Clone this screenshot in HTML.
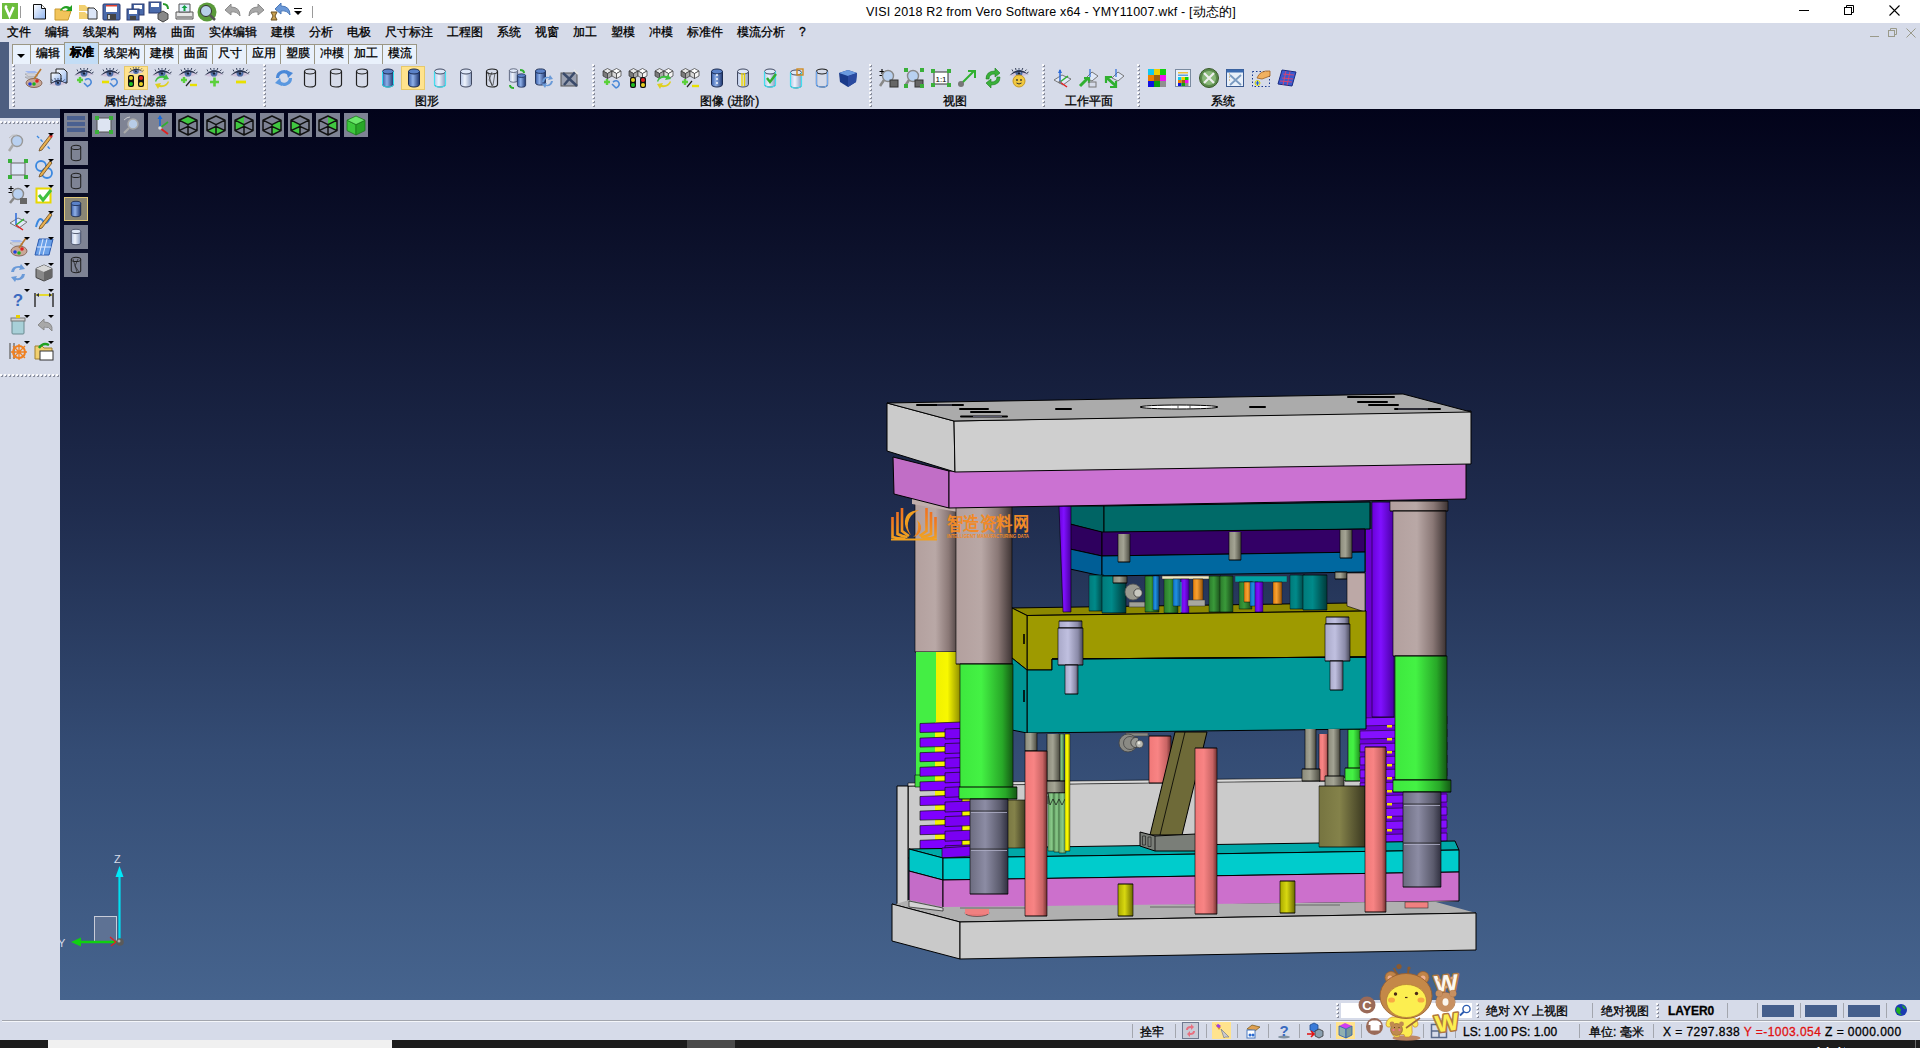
<!DOCTYPE html>
<html><head><meta charset="utf-8">
<style>
*{margin:0;padding:0;box-sizing:border-box}
html,body{width:1920px;height:1048px;overflow:hidden;background:#d6dbe9;font-family:"Liberation Sans",sans-serif;font-size:12px;color:#000}
.a{position:absolute}
.t{position:absolute;white-space:nowrap;line-height:1;-webkit-text-stroke-width:.3px}
.mn{position:absolute;top:25px;font-size:12px;line-height:14px;white-space:nowrap;-webkit-text-stroke-width:.3px}
.tab{position:absolute;top:44px;height:20px;border:1px solid #9b9785;border-bottom:none;background:#e9f1fc;font-size:12px;line-height:17px;text-align:center;-webkit-text-stroke-width:.3px}
.vb{position:absolute;width:24px;height:24px;background:#7e8394}
svg{position:absolute;overflow:visible}
.ic{position:absolute;width:20px;height:20px}
</style></head><body>

<svg width="0" height="0" style="position:absolute">
<defs><pattern id="dotp" width="4" height="4" patternUnits="userSpaceOnUse"><rect x="1" y="1" width="2" height="2" fill="#8a8e9c"/><rect x="0" y="0" width="2" height="2" fill="#fbfbfd"/></pattern>
<linearGradient id="gBlueCyl" x1="0" x2="1"><stop offset="0" stop-color="#3a5fa8"/><stop offset=".4" stop-color="#8fb0e8"/><stop offset="1" stop-color="#1d3570"/></linearGradient>
<linearGradient id="gLightCyl" x1="0" x2="1"><stop offset="0" stop-color="#b8c8e8"/><stop offset=".4" stop-color="#eef3fc"/><stop offset="1" stop-color="#8a9cc0"/></linearGradient>
<linearGradient id="gGray" x1="0" x2="1"><stop offset="0" stop-color="#c8c8c8"/><stop offset=".4" stop-color="#f0f0f0"/><stop offset="1" stop-color="#7a7a7a"/></linearGradient>
<linearGradient id="gDoc" x1="0" y1="0" x2="1" y2="1"><stop offset="0" stop-color="#ffffff"/><stop offset="1" stop-color="#8fb4f0"/></linearGradient>
<symbol id="eye" viewBox="0 0 20 10"><path d="M1 7.5 Q10 -1 19 6.5 Q10 10.5 1 7.5Z" fill="#cfc4dc"/><circle cx="10" cy="5.2" r="3.4" fill="#4d6da6"/><circle cx="10.6" cy="4.6" r="1.2" fill="#9ab4e0"/><circle cx="10" cy="5.4" r="1.2" fill="#141c30"/><path d="M0.5 7.5 Q10 -2.5 19.5 6.5 Q10 0.8 0.5 7.5Z" fill="#28324c"/><path d="M4 3.5 l-1 -2 M7 2 l-.5 -2 M10 1.5 v-1.5 M13 2 l.8 -2 M16 3.2 l1.5 -1.6 M18 5 l1.6 -1" stroke="#28324c" stroke-width=".9"/></symbol>
<symbol id="cylO" viewBox="0 0 14 20"><path d="M1.5 3.5v13a5.5 2.5 0 0 0 11 0v-13" fill="none" stroke="#222" stroke-width="1.2"/><ellipse cx="7" cy="3.5" rx="5.5" ry="2.5" fill="none" stroke="#222" stroke-width="1.2"/></symbol>
<symbol id="cylB" viewBox="0 0 14 20"><path d="M1.5 3.5v13a5.5 2.5 0 0 0 11 0v-13z" fill="url(#gBlueCyl)" stroke="#1a2a50" stroke-width="1"/><ellipse cx="7" cy="3.5" rx="5.5" ry="2.5" fill="#5b82c8" stroke="#1a2a50" stroke-width="1"/></symbol>
<symbol id="cylL" viewBox="0 0 14 20"><path d="M1.5 3.5v13a5.5 2.5 0 0 0 11 0v-13z" fill="url(#gLightCyl)" stroke="#404860" stroke-width="1"/><ellipse cx="7" cy="3.5" rx="5.5" ry="2.5" fill="#dfe8f8" stroke="#404860" stroke-width="1"/></symbol>
<symbol id="cube" viewBox="0 0 20 20"><path d="M10 2 L18 5.5 L18 14.5 L10 18 L2 14.5 L2 5.5Z" fill="#c8c8c8" stroke="#333" stroke-width="1"/><path d="M2 5.5 L10 9 L18 5.5 M10 9 V18" stroke="#333" fill="none"/><path d="M10 2 L18 5.5 L10 9 L2 5.5Z" fill="#f0f0f0" stroke="#333"/></symbol>
</defs></svg>

<div class="a" style="left:0;top:0;width:1920px;height:23px;background:#fff"></div>
<div class="t" style="left:866px;top:6px;font-size:12.5px;letter-spacing:.18px;-webkit-text-stroke:0">VISI 2018 R2 from Vero Software x64 - YMY11007.wkf - [动态的]</div>
<svg style="left:0;top:0" width="320" height="23">
<rect x="2" y="3" width="16" height="16" fill="#6cbd3c"/><path d="M5.5 7 L9.5 16 L13.5 7" stroke="#fff" stroke-width="2.6" fill="none"/><circle cx="6" cy="6.5" r="1.3" fill="#fff"/>
<rect x="20" y="6" width="1" height="12" fill="#9a9a9a"/>
<path d="M33.5 4.5h8l4 4v10.5h-12z" fill="url(#gDoc)" stroke="#111" stroke-width="1"/><path d="M41.5 4.5v4h4" fill="#fff" stroke="#111"/>
<path d="M55 9h6l2 2h8l-3 9h-13z" fill="#f2c45a" stroke="#c89a30"/><path d="M60 10 q4 -6 10 -3 l2 -2 v6 h-6 l2 -2 q-4 -2 -7 2z" fill="#22a022"/>
<path d="M79 5h6l2 2h3v4h-11z" fill="#f2d070"/><path d="M79 12h6l2 2h3v5h-11z" fill="#f2d070"/><path d="M88 8h6l3 3v8h-9z" fill="#dce6f8" stroke="#333"/>
<rect x="103" y="4" width="17" height="16" rx="1" fill="#4a6aaa" stroke="#2a3a70"/><rect x="106" y="5" width="11" height="7" fill="#fff"/><rect x="106" y="5" width="11" height="1.5" fill="#e04030"/><rect x="107" y="14" width="9" height="6" fill="#444"/><rect x="108" y="15" width="2" height="4" fill="#ccc"/>
<rect x="132" y="4" width="12" height="11" fill="#4a6aaa" stroke="#2a3a70"/><rect x="134" y="5" width="8" height="4" fill="#fff"/><rect x="127" y="9" width="12" height="11" fill="#4a6aaa" stroke="#2a3a70"/><rect x="129" y="10" width="8" height="4" fill="#fff"/><rect x="130" y="16" width="6" height="4" fill="#444"/>
<rect x="149" y="2" width="12" height="11" fill="#4a6aaa" stroke="#2a3a70"/><rect x="151" y="3" width="8" height="4" fill="#fff"/><path d="M158 14 l5 -3 l5 3 v5 l-5 3 l-5 -3z" fill="#888" stroke="#444"/><path d="M163 4 q5 0 5 5" stroke="#2a9a2a" stroke-width="2" fill="none"/>
<path d="M176 12h17v7h-17z" fill="#e8e8e8" stroke="#555"/><path d="M179 4h11v8h-11z" fill="#e0f0ff" stroke="#555"/><path d="M184.5 5 l3 3 h-2 v3 h-2 v-3 h-2z" fill="#10a040"/><rect x="177" y="16" width="15" height="2" fill="#999"/>
<circle cx="207" cy="12" r="9.5" fill="#5a9a3a"/><circle cx="206" cy="11" r="5.5" fill="#b8d0e8" stroke="#333"/><path d="M210 15 l5 5" stroke="#555" stroke-width="2.5"/>
<path d="M225 10 l6 -6 v3 q9 0 9 9 q-3 -5 -9 -4 v3z" fill="#a8a8a8" stroke="#8a8a8a"/>
<path d="M264 10 l-6 -6 v3 q-9 0 -9 9 q3 -5 9 -4 v3z" fill="#a8a8a8" stroke="#8a8a8a"/>
<path d="M275 9 l6 -6 v3 q9 0 9 9 q-3 -5 -9 -4 v3z" fill="#6a98d8" stroke="#4a78b8"/><path d="M271 12h6l-2 4 2 4h-6l2 -4z" fill="#c8a050" stroke="#6a5020"/>
<rect x="294" y="8" width="8" height="1" fill="#000"/><path d="M294 11h8l-4 4z" fill="#000"/>
<rect x="312" y="6" width="1" height="12" fill="#9a9a9a"/>
</svg>
<svg style="left:1780px;top:0" width="140" height="23">
<rect x="19" y="10" width="10" height="1" fill="#000"/>
<rect x="64.5" y="7.5" width="7" height="7" fill="none" stroke="#000"/><path d="M66.5 7.5v-2h7v7h-2" fill="none" stroke="#000"/>
<path d="M109.5 5.5l10 10M119.5 5.5l-10 10" stroke="#000" stroke-width="1.1"/>
</svg>
<div class="mn" style="left:7px">文件</div>
<div class="mn" style="left:45px">编辑</div>
<div class="mn" style="left:83px">线架构</div>
<div class="mn" style="left:133px">网格</div>
<div class="mn" style="left:171px">曲面</div>
<div class="mn" style="left:209px">实体编辑</div>
<div class="mn" style="left:271px">建模</div>
<div class="mn" style="left:309px">分析</div>
<div class="mn" style="left:347px">电极</div>
<div class="mn" style="left:385px">尺寸标注</div>
<div class="mn" style="left:447px">工程图</div>
<div class="mn" style="left:497px">系统</div>
<div class="mn" style="left:535px">视窗</div>
<div class="mn" style="left:573px">加工</div>
<div class="mn" style="left:611px">塑模</div>
<div class="mn" style="left:649px">冲模</div>
<div class="mn" style="left:687px">标准件</div>
<div class="mn" style="left:737px">模流分析</div>
<div class="mn" style="left:799px">?</div>
<svg style="left:1860px;top:23px" width="60" height="20">
<rect x="10" y="13" width="9" height="1" fill="#9a9a8a"/>
<rect x="28.5" y="7.5" width="6" height="6" fill="none" stroke="#9a9a8a"/><path d="M30.5 7.5v-2h6v6h-2" fill="none" stroke="#9a9a8a"/>
<path d="M46.5 5.5l9 9M55.5 5.5l-9 9" stroke="#9a9a8a"/>
</svg>
<div class="a" style="left:0;top:42px;width:9px;height:76px;background:#4d5e80"></div>
<div class="a" style="left:0;top:109px;width:60px;height:9px;background:#4d5e80"></div>
<div class="tab" style="left:12px;width:19px"></div>
<div class="tab" style="left:30px;width:35px">编辑</div>
<div class="tab" style="left:98px;width:47px">线架构</div>
<div class="tab" style="left:144px;width:35px">建模</div>
<div class="tab" style="left:178px;width:35px">曲面</div>
<div class="tab" style="left:212px;width:35px">尺寸</div>
<div class="tab" style="left:246px;width:35px">应用</div>
<div class="tab" style="left:280px;width:35px">塑膜</div>
<div class="tab" style="left:314px;width:35px">冲模</div>
<div class="tab" style="left:348px;width:35px">加工</div>
<div class="tab" style="left:382px;width:35px">模流</div>
<div class="tab" style="left:64px;width:35px;top:42px;height:22px;background:#c3ddf6;font-weight:bold;line-height:19px">标准</div>
<svg style="left:12px;top:45px" width="20" height="20"><path d="M5 9h8l-4 4z" fill="#000"/></svg>
<svg style="left:12px;top:64px" width="3" height="44"><rect width="3" height="44" fill="url(#dotp)"/></svg>
<svg style="left:263px;top:64px" width="3" height="44"><rect width="3" height="44" fill="url(#dotp)"/></svg>
<svg style="left:592px;top:64px" width="3" height="44"><rect width="3" height="44" fill="url(#dotp)"/></svg>
<svg style="left:869px;top:64px" width="3" height="44"><rect width="3" height="44" fill="url(#dotp)"/></svg>
<svg style="left:1042px;top:64px" width="3" height="44"><rect width="3" height="44" fill="url(#dotp)"/></svg>
<svg style="left:1137px;top:64px" width="3" height="44"><rect width="3" height="44" fill="url(#dotp)"/></svg>
<div class="t" style="left:104px;top:95px">属性/过滤器</div>
<div class="t" style="left:415px;top:95px">图形</div>
<div class="t" style="left:700px;top:95px">图像 (进阶)</div>
<div class="t" style="left:943px;top:95px">视图</div>
<div class="t" style="left:1065px;top:95px">工作平面</div>
<div class="t" style="left:1211px;top:95px">系统</div>
<div class="a" style="left:124px;top:66px;width:24px;height:24px;background:#ffe38d;border:1px solid #e7c96a"></div>
<div class="a" style="left:401px;top:66px;width:24px;height:24px;background:#ffe38d;border:1px solid #e7c96a"></div>
<svg style="left:0;top:0" width="1320" height="110"><g transform="translate(23,68)"><path d="M2 3h10l3 2h-10z" fill="#a0b8f0"/><path d="M2 6h10l3 2h-10z" fill="#e8e8f0" stroke="#888" stroke-width=".5"/><path d="M2 9h10l3 2h-10z" fill="#d0d0d8" stroke="#888" stroke-width=".5"/><ellipse cx="11" cy="15" rx="8" ry="4.5" fill="#c8a898" stroke="#8a6a5a"/><circle cx="7" cy="16" r="1.8" fill="#2040e0"/><circle cx="11" cy="16" r="1.8" fill="#20b020"/><circle cx="14" cy="13" r="1.8" fill="#e02020"/><path d="M18 1 l-7 10" stroke="#b87830" stroke-width="1.6"/></g><g transform="translate(48,68)"><path d="M8 1h8l3 3v11h-11z" fill="url(#gDoc)" stroke="#222"/><path d="M3 5h8l2 2v8h-10z" fill="url(#gDoc)" stroke="#222"/><use href="#eye" x="1" y="10" width="18" height="9"/></g><g transform="translate(74,68)"><use href="#eye" x="0" y="-0.5" width="20" height="11"/><path d="M3 12h6M6 9v6" stroke="#5ad03a" stroke-width="2.4"/><path d="M11 12 q4 -3 6 1 q1 3 -3 5 M10 15 l4 4" stroke="#4a88d8" stroke-width="1.6" fill="none"/></g><g transform="translate(100,68)"><use href="#eye" x="0" y="-0.5" width="20" height="11"/><path d="M2 14h7" stroke="#e8e000" stroke-width="2.6"/><path d="M11 12 q4 -3 6 1 q1 3 -3 5 M10 15 l4 4" stroke="#4a88d8" stroke-width="1.6" fill="none"/></g><g transform="translate(126,68)"><use href="#eye" x="2" y="-1" width="16" height="8"/><rect x="2" y="7" width="6" height="12" rx="2" fill="#111"/><circle cx="5" cy="10" r="2" fill="#e8d020"/><circle cx="5" cy="16" r="2" fill="#20c020"/><rect x="12" y="7" width="6" height="12" rx="2" fill="#111"/><circle cx="15" cy="10" r="2" fill="#e02020"/><circle cx="15" cy="16" r="2" fill="#e8d020"/></g><g transform="translate(152,68)"><use href="#eye" x="0" y="-0.5" width="20" height="11"/><path d="M3 13 q2 -6 10 -5 l1 -2 l3 5 l-6 1 l1 -2 q-6 -1 -8 4z" fill="#40c040"/><path d="M17 14 q-2 6 -10 5 l-1 2 l-3 -5 l6 -1 l-1 2 q6 1 8 -4z" fill="#e0d020"/></g><g transform="translate(178,68)"><use href="#eye" x="0" y="-0.5" width="20" height="11"/><path d="M3 12h6M6 9v6" stroke="#5ad03a" stroke-width="2.4"/><path d="M8 18l5 -6" stroke="#222" stroke-width="1.2"/><path d="M12 17h7" stroke="#e8e000" stroke-width="2.4"/></g><g transform="translate(204,68)"><use href="#eye" x="0" y="-0.5" width="20" height="11"/><path d="M6 14h9M10.5 9.5v9" stroke="#5ad03a" stroke-width="2.6"/></g><g transform="translate(230,68)"><use href="#eye" x="0" y="-0.5" width="20" height="11"/><path d="M6 14h10" stroke="#e8e000" stroke-width="2.8"/></g><g transform="translate(274,68)"><path d="M3.5 10 A6.5 6.5 0 0 1 15 6" stroke="#4a88d8" stroke-width="3.2" fill="none"/><path d="M12 2 L19 5 L14 10Z" fill="#4a88d8"/><path d="M16.5 10 A6.5 6.5 0 0 1 5 14" stroke="#5a98e0" stroke-width="3.2" fill="none"/><path d="M8 18 L1 15 L6 10Z" fill="#5a98e0"/></g><use href="#cylO" x="303" y="68" width="14" height="20"/><use href="#cylO" x="329" y="68" width="14" height="20"/><use href="#cylO" x="355" y="68" width="14" height="20"/><use href="#cylB" x="381" y="68" width="14" height="20"/><path d="M382.5 71.5v13a5.5 2.5 0 0 0 11 0v-13" fill="none" stroke="#30e0f0" stroke-width="1"/><use href="#cylB" x="407" y="68" width="14" height="20"/><use href="#cylL" x="433" y="68" width="14" height="20"/><path d="M434.5 71.5v13a5.5 2.5 0 0 0 11 0v-13" fill="none" stroke="#40e0f0" stroke-width="1.2"/><use href="#cylL" x="459" y="68" width="14" height="20"/><use href="#cylO" x="485" y="68" width="14" height="20"/><path d="M488 72 l4 14 M492 72 l-3 8 l4 6 M495 73 l-2 12" stroke="#333" stroke-width=".7" fill="none"/><g transform="translate(508,68)"><use href="#cylL" x="0" y="0" width="11" height="15"/><use href="#cylB" x="8" y="5" width="11" height="15"/><path d="M12 2 q4 0 4 3" stroke="#30b030" stroke-width="2" fill="none"/><path d="M2 17 q0 3 4 3" stroke="#30b030" stroke-width="2" fill="none"/></g><g transform="translate(534,68)"><use href="#cylB" x="0" y="0" width="13" height="18"/><path d="M8 14 q1 -6 7 -5 l1 -2 l3 4 l-5 1 l1 -2 q-4 0 -5 4z" fill="#6a9ad8"/><path d="M19 13 q-1 6 -7 5 l-1 2 l-3 -4 l5 -1 l-1 2 q4 0 5 -4z" fill="#6a9ad8"/></g><g transform="translate(560,68)"><rect x="1" y="5" width="16" height="13" fill="#9aa0b0" stroke="#555"/><path d="M3 5 l14 13 M16 3 l-12 14" stroke="#3a4a6a" stroke-width="2.4"/><path d="M14 2 l4 4" stroke="#e8e8e8" stroke-width="2"/></g><g transform="translate(602,68)"><path d="M1 3.0 L5.5 0.5 L10 3.0 L5.5 5.5Z" fill="#e8e8e8" stroke="#333" stroke-width=".7"/><path d="M1 3.0 L5.5 5.5 V10.5 L1 8.0Z" fill="#7a7a7a" stroke="#333" stroke-width=".7"/><path d="M5.5 5.5 L10 3.0 V8.0 L5.5 10.5Z" fill="#a8a8a8" stroke="#333" stroke-width=".7"/><path d="M10 3.0 L14.5 0.5 L19 3.0 L14.5 5.5Z" fill="#ffffff" stroke="#333" stroke-width=".7"/><path d="M10 3.0 L14.5 5.5 V10.5 L10 8.0Z" fill="#d8d8d8" stroke="#333" stroke-width=".7"/><path d="M14.5 5.5 L19 3.0 V8.0 L14.5 10.5Z" fill="#f4f4f4" stroke="#333" stroke-width=".7"/><path d="M2 14h6M5 11v6" stroke="#5ad03a" stroke-width="2.4"/><path d="M11 14 q4 -3 6 1 q1 3 -3 5 M10 16 l4 4" stroke="#4a88d8" stroke-width="1.6" fill="none"/></g><g transform="translate(628,68)"><path d="M1 3.0 L5.5 0.5 L10 3.0 L5.5 5.5Z" fill="#e8e8e8" stroke="#333" stroke-width=".7"/><path d="M1 3.0 L5.5 5.5 V10.5 L1 8.0Z" fill="#7a7a7a" stroke="#333" stroke-width=".7"/><path d="M5.5 5.5 L10 3.0 V8.0 L5.5 10.5Z" fill="#a8a8a8" stroke="#333" stroke-width=".7"/><path d="M10 3.0 L14.5 0.5 L19 3.0 L14.5 5.5Z" fill="#ffffff" stroke="#333" stroke-width=".7"/><path d="M10 3.0 L14.5 5.5 V10.5 L10 8.0Z" fill="#d8d8d8" stroke="#333" stroke-width=".7"/><path d="M14.5 5.5 L19 3.0 V8.0 L14.5 10.5Z" fill="#f4f4f4" stroke="#333" stroke-width=".7"/><rect x="2" y="9" width="6" height="11" rx="2" fill="#111"/><circle cx="5" cy="12" r="2" fill="#e8d020"/><circle cx="5" cy="17" r="2" fill="#20c020"/><rect x="12" y="9" width="6" height="11" rx="2" fill="#111"/><circle cx="15" cy="12" r="2" fill="#e02020"/><circle cx="15" cy="17" r="2" fill="#e8d020"/></g><g transform="translate(654,68)"><path d="M1 3.0 L5.5 0.5 L10 3.0 L5.5 5.5Z" fill="#e8e8e8" stroke="#333" stroke-width=".7"/><path d="M1 3.0 L5.5 5.5 V10.5 L1 8.0Z" fill="#7a7a7a" stroke="#333" stroke-width=".7"/><path d="M5.5 5.5 L10 3.0 V8.0 L5.5 10.5Z" fill="#a8a8a8" stroke="#333" stroke-width=".7"/><path d="M10 3.0 L14.5 0.5 L19 3.0 L14.5 5.5Z" fill="#ffffff" stroke="#333" stroke-width=".7"/><path d="M10 3.0 L14.5 5.5 V10.5 L10 8.0Z" fill="#d8d8d8" stroke="#333" stroke-width=".7"/><path d="M14.5 5.5 L19 3.0 V8.0 L14.5 10.5Z" fill="#f4f4f4" stroke="#333" stroke-width=".7"/><path d="M3 13 q2 -6 10 -5 l1 -2 l3 5 l-6 1 l1 -2 q-6 -1 -8 4z" fill="#40c040"/><path d="M17 14 q-2 6 -10 5 l-1 2 l-3 -5 l6 -1 l-1 2 q6 1 8 -4z" fill="#e0d020"/></g><g transform="translate(680,68)"><path d="M1 3.0 L5.5 0.5 L10 3.0 L5.5 5.5Z" fill="#e8e8e8" stroke="#333" stroke-width=".7"/><path d="M1 3.0 L5.5 5.5 V10.5 L1 8.0Z" fill="#7a7a7a" stroke="#333" stroke-width=".7"/><path d="M5.5 5.5 L10 3.0 V8.0 L5.5 10.5Z" fill="#a8a8a8" stroke="#333" stroke-width=".7"/><path d="M10 3.0 L14.5 0.5 L19 3.0 L14.5 5.5Z" fill="#ffffff" stroke="#333" stroke-width=".7"/><path d="M10 3.0 L14.5 5.5 V10.5 L10 8.0Z" fill="#d8d8d8" stroke="#333" stroke-width=".7"/><path d="M14.5 5.5 L19 3.0 V8.0 L14.5 10.5Z" fill="#f4f4f4" stroke="#333" stroke-width=".7"/><path d="M2 14h6M5 11v6" stroke="#5ad03a" stroke-width="2.4"/><path d="M7 19l5 -6" stroke="#222" stroke-width="1.2"/><path d="M12 18h7" stroke="#e8e000" stroke-width="2.4"/></g><use href="#cylB" x="710" y="68" width="14" height="20"/><path d="M717 74v10" stroke="#fff" stroke-width="1.4" stroke-dasharray="2 2"/><use href="#cylL" x="736" y="68" width="14" height="20"/><path d="M742 73v13M744.5 73v13" stroke="#e8d000" stroke-width="1.4"/><use href="#cylL" x="763" y="68" width="14" height="20"/><path d="M764.5 71.5v13a5.5 2.5 0 0 0 11 0v-13" fill="none" stroke="#40e0f0" stroke-width="1.2"/><path d="M767 78l3 4 6 -8" stroke="#30b030" stroke-width="2.4" fill="none"/><use href="#cylL" x="789" y="69" width="14" height="20"/><path d="M790.5 72.5v13a5.5 2.5 0 0 0 11 0v-13" fill="none" stroke="#40e0f0" stroke-width="1.2"/><rect x="797" y="69" width="6" height="6" fill="none" stroke="#d08a20" stroke-width="1.4"/><use href="#cylO" x="815" y="68" width="14" height="20"/><path d="M816.5 71.5v13a5.5 2.5 0 0 0 11 0v-13" fill="none" stroke="#70a8f0" stroke-width="1.2"/><g transform="translate(838,68)"><path d="M10 2 L19 5 L18 14 L10 19 L2 14 L1 5Z" fill="#1a3a8a"/><path d="M1 5 L10 8 L19 5 L10 2Z" fill="#6a9ae0"/><path d="M10 8 L10 19 L18 14 L19 5Z" fill="#2a4aa0"/></g><g transform="translate(879,68)"><path d="M0.5 3.5h5M3 1v5M0.5 7.5h5" stroke="#000" stroke-width="1.1"/><circle cx="9" cy="8" r="5.5" fill="#b8d0f0" stroke="#888" stroke-width="1.4"/><path d="M5 12 l-4 6" stroke="#888" stroke-width="2.5"/><rect x="11" y="12" width="8" height="7" fill="#666" stroke="#333"/></g><g transform="translate(904,68)"><circle cx="9" cy="8" r="5.5" fill="#b8d0f0" stroke="#888" stroke-width="1.4"/><path d="M5 12 l-4 6" stroke="#888" stroke-width="2.5"/><rect x="11" y="12" width="8" height="7" fill="#666" stroke="#333"/><rect x="0" y="0" width="4" height="4" fill="#3ab03a"/><rect x="16" y="0" width="4" height="4" fill="#3ab03a"/><rect x="0" y="16" width="4" height="4" fill="#3ab03a"/><rect x="16" y="16" width="4" height="4" fill="#3ab03a"/></g><g transform="translate(931,68)"><rect x="3" y="4" width="14" height="12" fill="#fff" stroke="#333"/><text x="10" y="13.5" font-size="8" text-anchor="middle" font-family="Liberation Sans" fill="#000">1:1</text><rect x="0" y="1" width="4" height="4" fill="#3ab03a"/><rect x="16" y="1" width="4" height="4" fill="#3ab03a"/><rect x="0" y="15" width="4" height="4" fill="#3ab03a"/><rect x="16" y="15" width="4" height="4" fill="#3ab03a"/></g><g transform="translate(957,68)"><path d="M4 16 L17 3" stroke="#30b030" stroke-width="2"/><path d="M11 3h7v7" stroke="#30b030" stroke-width="2" fill="none"/><circle cx="4" cy="16" r="3" fill="#777"/></g><g transform="translate(983,68)"><path d="M3 11 q0 -8 9 -8 l0 -3 l5 5 l-5 4 v-3 q-6 0 -6 5z" fill="#3ab03a" stroke="#1a801a" stroke-width=".6"/><path d="M17 9 q0 8 -9 8 l0 3 l-5 -5 l5 -4 v3 q6 0 6 -5z" fill="#3ab03a" stroke="#1a801a" stroke-width=".6"/></g><g transform="translate(1009,68)"><use href="#eye" x="0" y="0" width="20" height="10"/><circle cx="10" cy="13" r="6" fill="#f0c840" stroke="#c89a20"/><circle cx="8" cy="12" r=".9" fill="#333"/><circle cx="12" cy="12" r=".9" fill="#333"/><path d="M7.5 15 q2.5 2 5 0" stroke="#333" fill="none"/></g><g transform="translate(1052,68)"><path d="M2 12 L10 7 L19 11 L11 17Z" fill="#e0e8f8" stroke="#777"/><path d="M8 14 V2" stroke="#2a6ad8" stroke-width="1.5"/><path d="M6 5l2 -4 2 4z" fill="#2a6ad8"/><path d="M8 14 L16 8" stroke="#30b030" stroke-width="1.5"/><path d="M8 14 L15 19" stroke="#e02020" stroke-width="1.5"/><circle cx="8" cy="14" r="1.6" fill="#777"/></g><g transform="translate(1078,68)"><path d="M8 10 L14 4 L20 8 L14 13Z" fill="#e0e8f8" stroke="#777"/><path d="M12 9 V1" stroke="#2a6ad8" stroke-width="1.2"/><path d="M2 18 L10 10" stroke="#30b030" stroke-width="3"/><path d="M6 10h5v5" stroke="#30b030" stroke-width="2.2" fill="none"/><rect x="11" y="14" width="7" height="5" fill="none" stroke="#777"/></g><g transform="translate(1104,68)"><path d="M8 10 L14 4 L20 8 L14 13Z" fill="#e0e8f8" stroke="#777"/><path d="M12 9 V1" stroke="#2a6ad8" stroke-width="1.2"/><path d="M3 10 L12 18" stroke="#30b030" stroke-width="3"/><path d="M2 15v-6h6" stroke="#30b030" stroke-width="2.2" fill="none"/><path d="M12 13v6h-6" stroke="#30b030" stroke-width="2.2" fill="none"/></g><g transform="translate(1147,68)"><rect x="1" y="1" width="6" height="6" fill="#10c8f0"/><rect x="7" y="1" width="6" height="6" fill="#f0d000"/><rect x="13" y="1" width="6" height="6" fill="#10d010"/><rect x="1" y="7" width="6" height="6" fill="#f08000"/><rect x="7" y="7" width="6" height="6" fill="#a06010"/><rect x="13" y="7" width="6" height="6" fill="#f010f0"/><rect x="1" y="13" width="6" height="6" fill="#1010e0"/><rect x="7" y="13" width="6" height="6" fill="#10a010"/><rect x="13" y="13" width="6" height="6" fill="#909090"/></g><g transform="translate(1173,68)"><rect x="2.5" y="1.5" width="15" height="17" fill="#e8f0fa" stroke="#7a8aa0"/><rect x="5" y="4" width="10" height="1.5" fill="#f0c040"/><rect x="5" y="6.5" width="10" height="1.5" fill="#60a0e0"/><rect x="5.0" y="9" width="3.5" height="3" fill="#10c8f0"/><rect x="8.5" y="9" width="3.5" height="3" fill="#f0d000"/><rect x="12.0" y="9" width="3.5" height="3" fill="#10d010"/><rect x="5.0" y="12" width="3.5" height="3" fill="#f08000"/><rect x="8.5" y="12" width="3.5" height="3" fill="#a06010"/><rect x="12.0" y="12" width="3.5" height="3" fill="#f010f0"/><rect x="5.0" y="15" width="3.5" height="3" fill="#1010e0"/><rect x="8.5" y="15" width="3.5" height="3" fill="#10a010"/><rect x="12.0" y="15" width="3.5" height="3" fill="#909090"/></g><g transform="translate(1199,68)"><circle cx="10" cy="10" r="9.5" fill="#5a8a4a" stroke="#3a5a2a"/><circle cx="10" cy="10" r="7" fill="#8ab87a"/><path d="M5 5 L15 15 M15 5 L5 15" stroke="#eee" stroke-width="2.2"/></g><g transform="translate(1225,68)"><rect x="1.5" y="1.5" width="17" height="17" fill="#e8f0fa" stroke="#3a5a90"/><rect x="1.5" y="1.5" width="17" height="3" fill="#3a6ab0"/><path d="M5 7 L16 17 M16 7 L5 17" stroke="#7a9ac0" stroke-width="1.8"/><path d="M4 6h1M4 9h1M4 12h1" stroke="#c09040"/></g><g transform="translate(1251,68)"><rect x="1.5" y="3.5" width="17" height="15" fill="none" stroke="#1a3a90" stroke-dasharray="1.5 2"/><path d="M6 10 q3 -8 13 -7 v5 l-8 3z" fill="#f0b060" stroke="#a06020" stroke-width=".8"/><path d="M4 15h5M6.5 12.5v5" stroke="#1a5ad0" stroke-width="1.2"/><circle cx="6.5" cy="15" r="2.5" fill="none" stroke="#e0e000"/></g><g transform="translate(1277,68)"><path d="M5 2 L19 4 L15 18 L1 16Z" fill="#3a5ad0" stroke="#1a2a80"/><path d="M6 6 L17 7 M5 10 L16 11 M3 13 L15 14 M9 3 L6 17 M13 3.5 L10 17.5" stroke="#f04060" stroke-width=".8"/></g></svg>
<div class="a" id="vp" style="left:60px;top:109px;width:1860px;height:891px;background:linear-gradient(#02031a 0%,#0f1530 20%,#1f2c4e 45%,#344c74 72%,#46648e 100%)"></div>
<svg style="left:0;top:0" width="400" height="300"><rect x="64" y="113" width="24" height="24" fill="#7e8394"/><rect x="92" y="113" width="24" height="24" fill="#7e8394"/><rect x="120" y="113" width="24" height="24" fill="#7e8394"/><rect x="148" y="113" width="24" height="24" fill="#7e8394"/><rect x="176" y="113" width="24" height="24" fill="#7e8394"/><rect x="204" y="113" width="24" height="24" fill="#7e8394"/><rect x="232" y="113" width="24" height="24" fill="#7e8394"/><rect x="260" y="113" width="24" height="24" fill="#7e8394"/><rect x="288" y="113" width="24" height="24" fill="#7e8394"/><rect x="316" y="113" width="24" height="24" fill="#7e8394"/><rect x="344" y="113" width="24" height="24" fill="#7e8394"/><rect x="67" y="116" width="18" height="4" fill="#4a6090"/><rect x="67" y="122" width="18" height="4" fill="#4a6090"/><rect x="67" y="128" width="18" height="4" fill="#4a6090"/><rect x="97" y="118" width="14" height="14" fill="#dde4f2" stroke="#555"/><path d="M95 116h4v4h-4zM109 116h4v4h-4zM95 130h4v4h-4zM109 130h4v4h-4z" fill="#3ab03a"/><circle cx="133" cy="124" r="5" fill="#b8cce8" stroke="#aaa" stroke-width="1.5"/><path d="M129 128l-5 5" stroke="#aaa" stroke-width="2.2"/><path d="M124 120 q3 -3 6 -3" stroke="#ccc" fill="none"/><path d="M160 128 V116" stroke="#1a6ad8" stroke-width="1.6"/><path d="M157.5 119l2.5 -4 2.5 4z" fill="#1a6ad8"/><path d="M160 128 L168 122" stroke="#30b030" stroke-width="1.6"/><path d="M160 128 L168 134" stroke="#e02020" stroke-width="1.8"/><circle cx="160" cy="128" r="1.8" fill="#ddd"/><polygon points="179,120.2 188,116 197,120.2 188,124.6" fill="#40c840"/><path d="M179,120.2 L188,116 L197,120.2 L188,124.6 Z M179,120.2 L179,130.6 L188,135 L197,130.6 L197,120.2 M188,124.6 L188,135 M179,130.6 L188,126.4 L197,130.6" fill="none" stroke="#111" stroke-width="1.5" stroke-linejoin="round"/><polygon points="207,130.6 216,126.4 225,130.6 216,135" fill="#40c840"/><path d="M207,120.2 L216,116 L225,120.2 L216,124.6 Z M207,120.2 L207,130.6 L216,135 L225,130.6 L225,120.2 M216,124.6 L216,135 M207,130.6 L216,126.4 L225,130.6" fill="none" stroke="#111" stroke-width="1.5" stroke-linejoin="round"/><polygon points="235,120.2 244,116 244,126.4 235,130.6" fill="#40c840"/><path d="M235,120.2 L244,116 L253,120.2 L244,124.6 Z M235,120.2 L235,130.6 L244,135 L253,130.6 L253,120.2 M244,124.6 L244,135 M235,130.6 L244,126.4 L253,130.6" fill="none" stroke="#111" stroke-width="1.5" stroke-linejoin="round"/><polygon points="272,124.6 281,120.2 281,130.6 272,135" fill="#40c840"/><path d="M263,120.2 L272,116 L281,120.2 L272,124.6 Z M263,120.2 L263,130.6 L272,135 L281,130.6 L281,120.2 M272,124.6 L272,135 M263,130.6 L272,126.4 L281,130.6" fill="none" stroke="#111" stroke-width="1.5" stroke-linejoin="round"/><polygon points="291,120.2 300,124.6 300,135 291,130.6" fill="#40c840"/><path d="M291,120.2 L300,116 L309,120.2 L300,124.6 Z M291,120.2 L291,130.6 L300,135 L309,130.6 L309,120.2 M300,124.6 L300,135 M291,130.6 L300,126.4 L309,130.6" fill="none" stroke="#111" stroke-width="1.5" stroke-linejoin="round"/><polygon points="328,116 337,120.2 337,130.6 328,126.4" fill="#40c840"/><path d="M319,120.2 L328,116 L337,120.2 L328,124.6 Z M319,120.2 L319,130.6 L328,135 L337,130.6 L337,120.2 M328,124.6 L328,135 M319,130.6 L328,126.4 L337,130.6" fill="none" stroke="#111" stroke-width="1.5" stroke-linejoin="round"/><polygon points="347,120.2 356,124.6 356,135 347,130.6" fill="#3cc83c" stroke="#1a7a1a" stroke-width=".8"/><polygon points="356,124.6 365,120.2 365,130.6 356,135" fill="#28a828" stroke="#1a7a1a" stroke-width=".8"/><polygon points="347,120.2 356,116 365,120.2 356,124.6" fill="#6ae86a" stroke="#1a7a1a" stroke-width=".8"/><rect x="64" y="141" width="24" height="24" fill="#7e8394"/><rect x="64" y="169" width="24" height="24" fill="#7e8394"/><rect x="64.5" y="197.5" width="23" height="23" fill="#8a8674" stroke="#e0c878"/><rect x="64" y="225" width="24" height="24" fill="#7e8394"/><rect x="64" y="253" width="24" height="24" fill="#7e8394"/><use href="#cylO" x="70" y="143" width="12" height="20"/><use href="#cylO" x="70" y="171" width="12" height="20"/><use href="#cylB" x="70" y="199" width="12" height="20"/><use href="#cylL" x="70" y="227" width="12" height="20"/><use href="#cylO" x="70" y="255" width="12" height="20"/><path d="M73 259 l4 13 M78 259 l-3 7 l4 6" stroke="#222" stroke-width=".7" fill="none"/></svg>
<svg style="left:0px;top:121px" width="59" height="3"><rect width="59" height="3" fill="url(#dotp)"/></svg>
<svg style="left:0px;top:374px" width="59" height="3"><rect width="59" height="3" fill="url(#dotp)"/></svg>
<svg style="left:0;top:0" width="60" height="380"><g transform="translate(8,133)"><circle cx="9" cy="8" r="5.5" fill="#b8d0f0" stroke="#999" stroke-width="1.4"/><path d="M5 12 l-4 6" stroke="#aaa" stroke-width="2.5"/><path d="M1 5 q3 -4 8 -3" stroke="#bbb" fill="none"/></g><g transform="translate(34,133)"><path d="M3 3 l14 14" stroke="#3a88e0" stroke-width="1.4" stroke-dasharray="3 2"/><path d="M16 2 l-10 13 l-1 3 l3 -1 l10 -13z" fill="#e8b050" stroke="#6a4a20" stroke-width=".8"/><path d="M15 3l2 -2 2 2-2 2z" fill="#e03030"/></g><g transform="translate(8,159)"><rect x="3" y="4" width="14" height="12" fill="#dde6f6" stroke="#666"/><path d="M0 0h4v4h-4zM16 0h4v4h-4zM0 16h4v4h-4zM16 16h4v4h-4z" fill="#3ab03a"/></g><g transform="translate(34,159)"><circle cx="7" cy="7" r="5" fill="none" stroke="#3a88e0" stroke-width="1.8"/><circle cx="13" cy="14" r="5" fill="none" stroke="#3a88e0" stroke-width="1.8"/><path d="M16 2 l-10 13 l-1 3 l3 -1 l10 -13z" fill="#e8b050" stroke="#6a4a20" stroke-width=".8"/></g><g transform="translate(8,185)"><path d="M0.5 3.5h5M3 1v5M0.5 7.5h5" stroke="#000" stroke-width="1.1"/><circle cx="10" cy="9" r="5.5" fill="#b8d0f0" stroke="#888" stroke-width="1.4"/><path d="M6 13 l-4 5" stroke="#888" stroke-width="2.5"/><rect x="12" y="13" width="7" height="6" fill="#666"/></g><g transform="translate(34,185)"><rect x="2.5" y="3.5" width="14" height="14" fill="#fff" stroke="#e8d800" stroke-width="2"/><path d="M5 10 l4 5 l8 -10" stroke="#40c040" stroke-width="3" fill="none"/></g><g transform="translate(8,211)"><path d="M2 12 L10 7 L19 11 L11 17Z" fill="#e0e8f8" stroke="#777"/><path d="M8 14 V2" stroke="#2a6ad8" stroke-width="1.5"/><path d="M8 14 L16 8" stroke="#30b030" stroke-width="1.5"/><path d="M8 14 L15 19" stroke="#e02020" stroke-width="1.5"/></g><g transform="translate(34,211)"><path d="M2 16 q3 -12 7 -6 q4 6 8 -6" stroke="#3a88e0" stroke-width="2" fill="none"/><path d="M16 2 l-10 13 l-1 3 l3 -1 l10 -13z" fill="#e8b050" stroke="#6a4a20" stroke-width=".8"/></g><g transform="translate(8,237)"><path d="M2 3h10l3 2h-10z" fill="#a0b8f0"/><path d="M2 6h10l3 2h-10z" fill="#e8e8f0" stroke="#888" stroke-width=".5"/><ellipse cx="11" cy="14" rx="8" ry="5" fill="#c8a898" stroke="#8a6a5a"/><circle cx="7" cy="15" r="1.8" fill="#2040e0"/><circle cx="11" cy="16" r="1.8" fill="#20b020"/><circle cx="14" cy="12" r="1.8" fill="#e02020"/><path d="M18 1 l-7 10" stroke="#b87830" stroke-width="1.6"/></g><g transform="translate(34,237)"><path d="M5 2 L19 2 L15 18 L1 18Z" fill="#6aa0e8" stroke="#2a5ab0"/><path d="M9 2 L5 18 M13 2 L9 18 M3 10 H17" stroke="#dfeaff" stroke-width="1"/></g><g transform="translate(8,263)"><path d="M3 9 q1 -7 9 -6 l1 -2 l4 5 l-6 1 l1 -2 q-5 -1 -6 4z" fill="#6a9ad8"/><path d="M17 11 q-1 7 -9 6 l-1 2 l-4 -5 l6 -1 l-1 2 q5 1 6 -4z" fill="#6a9ad8"/></g><g transform="translate(34,263)"><path d="M10 2 L18 5.5 L18 14.5 L10 18 L2 14.5 L2 5.5Z" fill="#888" stroke="#444"/><path d="M10 2 L18 5.5 L10 9 L2 5.5Z" fill="#d8d8d8"/><path d="M10 9 L18 5.5 L18 14.5 L10 18Z" fill="#666"/></g><g transform="translate(8,289)"><text x="10" y="17" font-size="17" font-weight="bold" text-anchor="middle" fill="#3a6ac0" font-family="Liberation Sans">?</text></g><g transform="translate(34,289)"><path d="M1 4 v14 M19 4 v14" stroke="#333" stroke-width="1.5"/><path d="M2 6 h16" stroke="#e8d800" stroke-width="1.6"/><path d="M2 6 l3 -2 v4z M18 6 l-3 -2 v4z" fill="#333"/></g><g transform="translate(8,315)"><rect x="4" y="5" width="12" height="14" rx="1" fill="#a8d0d8" stroke="#6a8a90"/><rect x="3" y="3" width="14" height="3" fill="#d0d0d0" stroke="#777"/><rect x="8" y="0" width="4" height="3" fill="#e8d000"/></g><g transform="translate(34,315)"><path d="M4 10 l6 -6 v3 q9 0 8 9 q-3 -5 -8 -4 v3z" fill="#a8a8a8" stroke="#8a8a8a"/></g><g transform="translate(8,341)"><path d="M2 2 v16 M6 2 v16" stroke="#777" stroke-width="1.5"/><circle cx="11" cy="11" r="6" fill="none" stroke="#f08020" stroke-width="2"/><path d="M11 3v16M3 11h16M5 5l12 12M17 5l-12 12" stroke="#f08020" stroke-width="1.3"/></g><g transform="translate(34,341)"><path d="M1 5h7l2 2h8v11h-17z" fill="#f2d070" stroke="#a08030"/><rect x="6" y="10" width="13" height="9" fill="#fff" stroke="#333"/><path d="M5 7 q4 -6 10 -3" stroke="#20a020" stroke-width="2.4" fill="none"/></g><path d="M48 133h6l-3 3z" fill="#000"/><path d="M48 159h6l-3 3z" fill="#000"/><path d="M24 185h6l-3 3z" fill="#000"/><path d="M48 185h6l-3 3z" fill="#000"/><path d="M24 211h6l-3 3z" fill="#000"/><path d="M48 211h6l-3 3z" fill="#000"/><path d="M24 237h6l-3 3z" fill="#000"/><path d="M48 237h6l-3 3z" fill="#000"/><path d="M24 263h6l-3 3z" fill="#000"/><path d="M48 263h6l-3 3z" fill="#000"/><path d="M24 289h6l-3 3z" fill="#000"/><path d="M48 289h6l-3 3z" fill="#000"/><path d="M24 315h6l-3 3z" fill="#000"/><path d="M48 315h6l-3 3z" fill="#000"/><path d="M24 341h6l-3 3z" fill="#000"/><path d="M48 341h6l-3 3z" fill="#000"/></svg>
<svg style="left:0;top:0" width="200" height="1000">
<rect x="94.5" y="916.5" width="22" height="25" fill="#5e7294" stroke="#c8ccd8" stroke-width="1"/>
<path d="M119.5 942 V874" stroke="#00e0f0" stroke-width="2.2"/><path d="M115.5 877 L119.5 866 L123.5 877Z" fill="#00e8f8"/>
<path d="M120 942 H78" stroke="#10d010" stroke-width="2.6"/><path d="M81 937.5 L71 942 L81 946.5Z" fill="#10d010"/>
<path d="M110 937 l6 5 l-5 4" stroke="#e02020" stroke-width="1.2" fill="none"/>
<circle cx="120" cy="942" r="3.8" fill="#5a5a5a"/><circle cx="119" cy="941" r="1.5" fill="#aaa"/>
<text x="114" y="863" font-size="11" fill="#d8dce8" font-family="Liberation Sans">Z</text>
<text x="58" y="947" font-size="11" fill="#d8dce8" font-family="Liberation Sans">Y</text>
</svg>
<div class="a" style="left:0;top:930px;width:60px;height:20px;background:#d6dbe9"></div>
<div class="a" style="left:2px;top:1020px;width:1918px;height:1px;background:#a3a6ae"></div>
<div class="a" style="left:2px;top:1021px;width:1918px;height:1px;background:#f4f6fa"></div>
<div class="a" style="left:0;top:1040px;width:1920px;height:8px;background:#1c1c1c"></div>
<div class="a" style="left:48px;top:1040px;width:344px;height:8px;background:#f0f0f0"></div>
<div class="a" style="left:687px;top:1040px;width:48px;height:8px;background:#4a4a4a"></div>
<div class="a" style="left:1915px;top:1040px;width:1px;height:8px;background:#6a6a6a"></div>
<div class="a" style="left:1815px;top:1041px;width:30px;height:7px;overflow:hidden"><div class="t" style="left:0;top:4px;color:#fff;font-size:13px;letter-spacing:.5px;-webkit-text-stroke-width:0">14:41</div></div>
<svg style="left:1336px;top:1003px" width="3" height="15"><rect width="3" height="15" fill="url(#dotp)"/></svg>
<div class="a" style="left:1341px;top:1003px;width:131px;height:15px;background:#fff"></div>
<svg style="left:1458px;top:1003px" width="14" height="15"><circle cx="8.5" cy="6" r="3.6" fill="none" stroke="#2a5ab0" stroke-width="1.4"/><path d="M6 8.5 l-4 4" stroke="#2a5ab0" stroke-width="1.8"/></svg>
<svg style="left:1476px;top:1003px" width="3" height="15"><rect width="3" height="15" fill="url(#dotp)"/></svg>
<div class="t" style="left:1486px;top:1005px">绝对 XY 上视图</div>
<div class="a" style="left:1592px;top:1003px;width:1px;height:15px;background:#a3a6ae"></div>
<div class="t" style="left:1601px;top:1005px">绝对视图</div>
<svg style="left:1656px;top:1003px" width="3" height="15"><rect width="3" height="15" fill="url(#dotp)"/></svg>
<div class="t" style="left:1668px;top:1005px;font-weight:bold">LAYER0</div>
<div class="a" style="left:1727px;top:1003px;width:1px;height:15px;background:#a3a6ae"></div>
<div class="a" style="left:1757px;top:1003px;width:1px;height:15px;background:#a3a6ae"></div>
<div class="a" style="left:1762px;top:1005px;width:32px;height:12px;background:#445e8c"></div>
<div class="a" style="left:1805px;top:1005px;width:32px;height:12px;background:#445e8c"></div>
<div class="a" style="left:1848px;top:1005px;width:32px;height:12px;background:#445e8c"></div>
<div class="a" style="left:1800px;top:1003px;width:1px;height:15px;background:#a3a6ae"></div>
<div class="a" style="left:1843px;top:1003px;width:1px;height:15px;background:#a3a6ae"></div>
<div class="a" style="left:1886px;top:1003px;width:1px;height:15px;background:#a3a6ae"></div>
<svg style="left:1893px;top:1003px" width="16" height="16"><circle cx="8" cy="7" r="6" fill="#1a3ab0"/><path d="M4 4 q3 0 4 3 q-2 3 1 5 q-4 0 -6 -4z M9 2 q3 1 4 4 q-3 0 -4 -4z" fill="#20b020"/></svg>
<div class="a" style="left:1132px;top:1024px;width:1px;height:14px;background:#a3a6ae"></div>
<div class="a" style="left:1175px;top:1024px;width:1px;height:14px;background:#a3a6ae"></div>
<div class="a" style="left:1206px;top:1024px;width:1px;height:14px;background:#a3a6ae"></div>
<div class="a" style="left:1237px;top:1024px;width:1px;height:14px;background:#a3a6ae"></div>
<div class="a" style="left:1268px;top:1024px;width:1px;height:14px;background:#a3a6ae"></div>
<div class="a" style="left:1299px;top:1024px;width:1px;height:14px;background:#a3a6ae"></div>
<div class="a" style="left:1330px;top:1024px;width:1px;height:14px;background:#a3a6ae"></div>
<div class="a" style="left:1361px;top:1024px;width:1px;height:14px;background:#a3a6ae"></div>
<div class="a" style="left:1423px;top:1024px;width:1px;height:14px;background:#a3a6ae"></div>
<div class="a" style="left:1455px;top:1024px;width:1px;height:14px;background:#a3a6ae"></div>
<div class="a" style="left:1579px;top:1024px;width:1px;height:14px;background:#a3a6ae"></div>
<div class="a" style="left:1653px;top:1024px;width:1px;height:14px;background:#a3a6ae"></div>
<div class="t" style="left:1140px;top:1026px">拴牢</div>
<div class="a" style="left:1182px;top:1022px;width:17px;height:17px;border:1px solid #707a90;background:#c8ccd8"></div>
<svg style="left:1182px;top:1022px" width="17" height="17"><path d="M4 8 q0 -4 5 -4 l0 -2 l3 3 l-3 3 v-2 q-3 0 -3 2z M13 9 q0 4 -5 4 l0 2 l-3 -3 l3 -3 v2 q3 0 3 -2z" fill="#e87080"/></svg>
<div class="a" style="left:1212px;top:1022px;width:19px;height:17px;background:#ffe38d"></div>
<svg style="left:1212px;top:1022px" width="19" height="17"><path d="M3 2 l6 3 l-2 3z" fill="#e0a020"/><path d="M5 3 l3 2" stroke="#a040e0" stroke-width="3"/><path d="M9 7 l8 8 h-4 l-1 1 z" fill="#c8c8d0" stroke="#888" stroke-width=".8"/></svg>
<svg style="left:1244px;top:1022px" width="18" height="17"><path d="M3 7 l5 -4 l8 2 l-5 4z" fill="#e0a050" stroke="#806020" stroke-width=".8"/><rect x="3" y="8" width="8" height="8" fill="#fff" stroke="#4a7ac0"/><circle cx="6" cy="13" r="1.5" fill="#2a6ad0"/><circle cx="9" cy="13" r="1.5" fill="#2a6ad0"/></svg>
<svg style="left:1275px;top:1022px" width="18" height="17"><ellipse cx="9" cy="15" rx="6" ry="1.5" fill="#8090a0"/><text x="9" y="14" font-size="15" font-weight="bold" text-anchor="middle" fill="#3a6ac0" font-family="Liberation Sans">?</text></svg>
<svg style="left:1305px;top:1022px" width="20" height="17"><path d="M5 3 l4 -2 l4 2 v5 l-4 2 l-4 -2z" fill="#3a7ad8" stroke="#1a4a90" stroke-width=".8"/><path d="M10 9 l4 -2 l4 2 v5 l-4 2 l-4 -2z" fill="#8aa0b0" stroke="#333" stroke-width=".8"/><path d="M2 12 h7 M6 9 l3 3 l-3 3" stroke="#e01010" stroke-width="1.6" fill="none"/></svg>
<div class="a" style="left:1336px;top:1022px;width:19px;height:17px;background:#ffe38d"></div>
<svg style="left:1336px;top:1022px" width="19" height="17"><path d="M3 4 l6 -3 l7 3 l-6 3z" fill="#d040f0"/><path d="M3 4 v9 l7 3 v-9z" fill="#90b0b0" stroke="#2a5ab0" stroke-width=".8"/><path d="M10 7 v9 l6 -3 v-9z" fill="#7a9a9a" stroke="#2a5ab0" stroke-width=".8"/></svg>
<svg style="left:1428px;top:1022px" width="22" height="17"><rect x="3.5" y="2.5" width="15" height="13" fill="none" stroke="#5a6a8a" stroke-width="1.5"/><path d="M3 9 h16 M11 9 v7" stroke="#5a6a8a" stroke-width="1.5"/></svg>
<div class="t" style="left:1463px;top:1026px">LS: 1.00 PS: 1.00</div>
<div class="t" style="left:1589px;top:1026px">单位: 毫米</div>
<div class="t" style="left:1663px;top:1026px;letter-spacing:.45px">X = 7297.838 <span style="color:#e01010">Y =-1003.054</span> Z = 0000.000</div>
<svg style="left:0;top:0" width="1920" height="1000"><defs>
<linearGradient id="pg" x1="0" x2="1"><stop offset="0" stop-color="#b3a09e"/><stop offset=".45" stop-color="#b9a8a6"/><stop offset=".75" stop-color="#8a7876"/><stop offset="1" stop-color="#3e3434"/></linearGradient>
<linearGradient id="gr" x1="0" x2="1"><stop offset="0" stop-color="#3ee83e"/><stop offset=".4" stop-color="#44f244"/><stop offset=".8" stop-color="#28a828"/><stop offset="1" stop-color="#145814"/></linearGradient>
<linearGradient id="ye" x1="0" x2="1"><stop offset="0" stop-color="#f0f000"/><stop offset=".5" stop-color="#f8f800"/><stop offset="1" stop-color="#909000"/></linearGradient>
<linearGradient id="pu" x1="0" x2="1"><stop offset="0" stop-color="#6a00d8"/><stop offset=".4" stop-color="#8010ff"/><stop offset="1" stop-color="#4800a0"/></linearGradient>
<linearGradient id="sa" x1="0" x2="1"><stop offset="0" stop-color="#f07878"/><stop offset=".4" stop-color="#f88484"/><stop offset=".8" stop-color="#c86464"/><stop offset="1" stop-color="#703030"/></linearGradient>
<linearGradient id="bu" x1="0" x2="1"><stop offset="0" stop-color="#6c6c80"/><stop offset=".4" stop-color="#8c8ca4"/><stop offset=".8" stop-color="#5a5a6c"/><stop offset="1" stop-color="#303040"/></linearGradient>
<linearGradient id="la" x1="0" x2="1"><stop offset="0" stop-color="#a8a8c8"/><stop offset=".4" stop-color="#c0c0e0"/><stop offset=".8" stop-color="#8a8aa8"/><stop offset="1" stop-color="#484858"/></linearGradient>
<linearGradient id="ol" x1="0" x2="1"><stop offset="0" stop-color="#767440"/><stop offset=".45" stop-color="#84824a"/><stop offset="1" stop-color="#3a3820"/></linearGradient>
<linearGradient id="gy" x1="0" x2="1"><stop offset="0" stop-color="#8a8a7a"/><stop offset=".45" stop-color="#a4a494"/><stop offset="1" stop-color="#4a4a40"/></linearGradient>
<linearGradient id="te" x1="0" x2="1"><stop offset="0" stop-color="#007a7a"/><stop offset=".4" stop-color="#008a8a"/><stop offset="1" stop-color="#003a3a"/></linearGradient>
<linearGradient id="dg" x1="0" x2="1"><stop offset="0" stop-color="#2a7a2a"/><stop offset=".4" stop-color="#3a9a3a"/><stop offset="1" stop-color="#184818"/></linearGradient>
<linearGradient id="bl" x1="0" x2="1"><stop offset="0" stop-color="#1070c0"/><stop offset=".4" stop-color="#2090e0"/><stop offset="1" stop-color="#0a4a80"/></linearGradient>
<linearGradient id="or" x1="0" x2="1"><stop offset="0" stop-color="#e08010"/><stop offset=".4" stop-color="#f8a030"/><stop offset="1" stop-color="#905008"/></linearGradient>
<linearGradient id="lg" x1="0" x2="1"><stop offset="0" stop-color="#6aa86a"/><stop offset=".5" stop-color="#88c888"/><stop offset="1" stop-color="#4a884a"/></linearGradient>
<linearGradient id="yp" x1="0" x2="1"><stop offset="0" stop-color="#a8a800"/><stop offset=".45" stop-color="#d8d810"/><stop offset="1" stop-color="#6a6a00"/></linearGradient>
</defs><polygon points="908,786 1400,779 1400,852 908,858" fill="#cbcbcb" stroke="#000" stroke-width="1" stroke-linejoin="round"/><polygon points="908,783 1400,777 1400,780 908,786" fill="#dadada" stroke="#000" stroke-width="0.6" stroke-linejoin="round"/><polygon points="897,786 908,786 908,908 897,906" fill="#cfcfcf" stroke="#000" stroke-width="1" stroke-linejoin="round"/><rect x="915" y="500" width="45" height="152" fill="url(#pg)"/><path d="M915 500 V652 M960 500 V652" stroke="#000" stroke-width="0.6"/><path d="M915 652 H960" stroke="#000" stroke-width="1"/><path d="M915 500 H960" stroke="#000" stroke-width="1"/><polygon points="912,496 958,508 958,512 912,504" fill="#c0aeac" stroke="#000" stroke-width="0" stroke-linejoin="round"/><rect x="916" y="652" width="20" height="80" fill="#44ee44"/><rect x="935" y="652" width="25" height="80" fill="url(#ye)"/><rect x="916" y="652" width="20" height="135" fill="#44ee44"/><path d="M915 775 H936 V787 H915Z" fill="#40e040" stroke="#000" stroke-width=".6"/><rect x="935" y="722" width="12" height="137" fill="#f4f400"/><rect x="956" y="796" width="16" height="62" fill="#f4f400"/><path d="M920 723.5 L962 722.0 L962 731.5 L920 732.5Z" fill="#7f00ff" stroke="#111" stroke-width=".7"/><path d="M920 738.1 L962 736.6 L962 746.1 L920 747.1Z" fill="#7f00ff" stroke="#111" stroke-width=".7"/><path d="M920 752.7 L962 751.2 L962 760.7 L920 761.7Z" fill="#7f00ff" stroke="#111" stroke-width=".7"/><path d="M920 767.3 L962 765.8 L962 775.3 L920 776.3Z" fill="#7f00ff" stroke="#111" stroke-width=".7"/><path d="M920 781.9 L962 780.4 L962 789.9 L920 790.9Z" fill="#7f00ff" stroke="#111" stroke-width=".7"/><path d="M920 796.5 L962 795.0 L962 804.5 L920 805.5Z" fill="#7f00ff" stroke="#111" stroke-width=".7"/><path d="M920 811.1 L962 809.6 L962 819.1 L920 820.1Z" fill="#7f00ff" stroke="#111" stroke-width=".7"/><path d="M920 825.7 L962 824.2 L962 833.7 L920 834.7Z" fill="#7f00ff" stroke="#111" stroke-width=".7"/><path d="M920 840.3 L962 838.8 L962 848.3 L920 849.3Z" fill="#7f00ff" stroke="#111" stroke-width=".7"/><path d="M920 854.9 L962 853.4 L962 862.9 L920 863.9Z" fill="#7f00ff" stroke="#111" stroke-width=".7"/><path d="M945 729.0 L971 728.0 L971 738.0 L945 739.0Z" fill="#7a00f4" stroke="#111" stroke-width=".7"/><path d="M945 743.6 L971 742.6 L971 752.6 L945 753.6Z" fill="#7a00f4" stroke="#111" stroke-width=".7"/><path d="M945 758.2 L971 757.2 L971 767.2 L945 768.2Z" fill="#7a00f4" stroke="#111" stroke-width=".7"/><path d="M945 772.8 L971 771.8 L971 781.8 L945 782.8Z" fill="#7a00f4" stroke="#111" stroke-width=".7"/><path d="M945 787.4 L971 786.4 L971 796.4 L945 797.4Z" fill="#7a00f4" stroke="#111" stroke-width=".7"/><path d="M945 802.0 L971 801.0 L971 811.0 L945 812.0Z" fill="#7a00f4" stroke="#111" stroke-width=".7"/><path d="M945 816.6 L971 815.6 L971 825.6 L945 826.6Z" fill="#7a00f4" stroke="#111" stroke-width=".7"/><path d="M945 831.2 L971 830.2 L971 840.2 L945 841.2Z" fill="#7a00f4" stroke="#111" stroke-width=".7"/><path d="M945 845.8 L971 844.8 L971 854.8 L945 855.8Z" fill="#7a00f4" stroke="#111" stroke-width=".7"/><path d="M945 860.4 L971 859.4 L971 869.4 L945 870.4Z" fill="#7a00f4" stroke="#111" stroke-width=".7"/><rect x="1348" y="729" width="13" height="41" fill="url(#gr)"/><path d="M1348 729 V770 M1361 729 V770" stroke="#000" stroke-width="0.6"/><path d="M1348 770 H1361" stroke="#000" stroke-width="1"/><path d="M1348 729 H1361" stroke="#000" stroke-width="1"/><rect x="1345" y="768" width="19" height="13" fill="url(#gr)"/><path d="M1345 768 V781 M1364 768 V781" stroke="#000" stroke-width="0.6"/><path d="M1345 781 H1364" stroke="#000" stroke-width="1"/><path d="M1345 768 H1364" stroke="#000" stroke-width="1"/><rect x="1360" y="716" width="87" height="144" fill="#6c00d8"/><path d="M1360 718 L1447 716 L1447 724 L1360 726Z" fill="#8410ff" stroke="#111" stroke-width=".6"/><rect x="1387" y="725" width="5" height="2.5" fill="#f0e000"/><path d="M1360 731 L1447 729 L1447 737 L1360 739Z" fill="#8410ff" stroke="#111" stroke-width=".6"/><rect x="1387" y="738" width="5" height="2.5" fill="#f0e000"/><path d="M1360 744 L1447 742 L1447 750 L1360 752Z" fill="#8410ff" stroke="#111" stroke-width=".6"/><rect x="1387" y="751" width="5" height="2.5" fill="#f0e000"/><path d="M1360 757 L1447 755 L1447 763 L1360 765Z" fill="#8410ff" stroke="#111" stroke-width=".6"/><rect x="1387" y="764" width="5" height="2.5" fill="#f0e000"/><path d="M1360 770 L1447 768 L1447 776 L1360 778Z" fill="#8410ff" stroke="#111" stroke-width=".6"/><rect x="1387" y="777" width="5" height="2.5" fill="#f0e000"/><path d="M1360 783 L1447 781 L1447 789 L1360 791Z" fill="#8410ff" stroke="#111" stroke-width=".6"/><rect x="1387" y="790" width="5" height="2.5" fill="#f0e000"/><path d="M1360 796 L1447 794 L1447 802 L1360 804Z" fill="#8410ff" stroke="#111" stroke-width=".6"/><rect x="1387" y="803" width="5" height="2.5" fill="#f0e000"/><path d="M1360 809 L1447 807 L1447 815 L1360 817Z" fill="#8410ff" stroke="#111" stroke-width=".6"/><rect x="1387" y="816" width="5" height="2.5" fill="#f0e000"/><path d="M1360 822 L1447 820 L1447 828 L1360 830Z" fill="#8410ff" stroke="#111" stroke-width=".6"/><rect x="1387" y="829" width="5" height="2.5" fill="#f0e000"/><path d="M1360 835 L1447 833 L1447 841 L1360 843Z" fill="#8410ff" stroke="#111" stroke-width=".6"/><rect x="1387" y="842" width="5" height="2.5" fill="#f0e000"/><path d="M1360 848 L1447 846 L1447 854 L1360 856Z" fill="#8410ff" stroke="#111" stroke-width=".6"/><rect x="1387" y="855" width="5" height="2.5" fill="#f0e000"/><polygon points="909,849 1455,841 1459,850 943,858" fill="#00a8a8" stroke="#000" stroke-width="1" stroke-linejoin="round"/><path d="M942 848 L972 846 L972 856 L942 858Z" fill="#7a00f4" stroke="#111" stroke-width=".7"/><rect x="1366" y="529" width="8" height="188" fill="#6a00d0"/><rect x="1372" y="502" width="22" height="215" fill="url(#pu)"/><path d="M1372 502 V717 M1394 502 V717" stroke="#000" stroke-width="0.48"/><path d="M1372 717 H1394" stroke="#000" stroke-width="0.8"/><path d="M1372 502 H1394" stroke="#000" stroke-width="0.8"/><polygon points="1070,506 1104,506 1104,533 1070,524" fill="#006464" stroke="#000" stroke-width="1" stroke-linejoin="round"/><polygon points="1104,506 1370,502 1370,529 1104,533" fill="#006a68" stroke="#000" stroke-width="1" stroke-linejoin="round"/><polygon points="1070,524 1102,532 1102,556 1070,549" fill="#2e005e" stroke="#000" stroke-width="1" stroke-linejoin="round"/><polygon points="1102,532 1365,529 1365,552 1102,556" fill="#330066" stroke="#000" stroke-width="1" stroke-linejoin="round"/><polygon points="1070,549 1102,556 1102,576 1070,569" fill="#005e96" stroke="#000" stroke-width="1" stroke-linejoin="round"/><polygon points="1102,556 1365,552 1365,572 1102,576" fill="#0068a0" stroke="#000" stroke-width="1" stroke-linejoin="round"/><rect x="1118" y="534" width="12" height="28" fill="url(#gy)"/><path d="M1118 534 V562 M1130 534 V562" stroke="#000" stroke-width="0.6"/><path d="M1118 562 H1130" stroke="#000" stroke-width="1"/><rect x="1229" y="532" width="12" height="28" fill="url(#gy)"/><path d="M1229 532 V560 M1241 532 V560" stroke="#000" stroke-width="0.6"/><path d="M1229 560 H1241" stroke="#000" stroke-width="1"/><rect x="1340" y="530" width="12" height="28" fill="url(#gy)"/><path d="M1340 530 V558 M1352 530 V558" stroke="#000" stroke-width="0.6"/><path d="M1340 558 H1352" stroke="#000" stroke-width="1"/><polygon points="1012,608 1350,603 1366,611 1027,615.5" fill="#8c8800" stroke="#000" stroke-width="1" stroke-linejoin="round"/><path d="M1059 506 H1071 L1071 612 H1063Z" fill="url(#pu)" stroke="#000" stroke-width=".6"/><rect x="1089" y="575" width="15" height="36" fill="url(#te)"/><path d="M1089 575 V611 M1104 575 V611" stroke="#000" stroke-width="0.36"/><path d="M1089 611 H1104" stroke="#000" stroke-width="0.6"/><path d="M1089 575 H1104" stroke="#000" stroke-width="0.6"/><rect x="1102" y="576" width="24" height="37" fill="url(#te)"/><path d="M1102 576 V613 M1126 576 V613" stroke="#000" stroke-width="0.48"/><path d="M1102 613 H1126" stroke="#000" stroke-width="0.8"/><path d="M1102 576 H1126" stroke="#000" stroke-width="0.8"/><rect x="1113" y="576" width="14" height="7" fill="url(#gy)"/><path d="M1113 576 V583 M1127 576 V583" stroke="#000" stroke-width="0.6"/><path d="M1113 583 H1127" stroke="#000" stroke-width="1"/><path d="M1113 576 H1127" stroke="#000" stroke-width="1"/><circle cx="1133" cy="592" r="8" fill="#9a9a90" stroke="#555" stroke-width=".8"/><circle cx="1138" cy="593" r="4.2" fill="#c8c8c0" stroke="#333" stroke-width=".8"/><rect x="1129" y="602" width="16" height="5" fill="#a0a098" stroke="#333" stroke-width=".6"/><rect x="1145" y="576" width="14" height="36" fill="url(#dg)"/><path d="M1145 576 V612 M1159 576 V612" stroke="#000" stroke-width="0.36"/><path d="M1145 612 H1159" stroke="#000" stroke-width="0.6"/><path d="M1145 576 H1159" stroke="#000" stroke-width="0.6"/><rect x="1153" y="576" width="6" height="34" fill="url(#bl)"/><path d="M1153 576 V610 M1159 576 V610" stroke="#000" stroke-width="0.24"/><path d="M1153 610 H1159" stroke="#000" stroke-width="0.4"/><path d="M1153 576 H1159" stroke="#000" stroke-width="0.4"/><rect x="1164" y="576" width="14" height="37" fill="url(#dg)"/><path d="M1164 576 V613 M1178 576 V613" stroke="#000" stroke-width="0.36"/><path d="M1164 613 H1178" stroke="#000" stroke-width="0.6"/><path d="M1164 576 H1178" stroke="#000" stroke-width="0.6"/><rect x="1162" y="576" width="48" height="3" fill="#f0e8c0" stroke="#333" stroke-width=".5"/><rect x="1173" y="579" width="8" height="27" fill="url(#bl)"/><path d="M1173 579 V606 M1181 579 V606" stroke="#000" stroke-width="0.24"/><path d="M1173 606 H1181" stroke="#000" stroke-width="0.4"/><path d="M1173 579 H1181" stroke="#000" stroke-width="0.4"/><rect x="1181" y="579" width="8" height="34" fill="url(#pu)"/><path d="M1181 579 V613 M1189 579 V613" stroke="#000" stroke-width="0.3"/><path d="M1181 613 H1189" stroke="#000" stroke-width="0.5"/><path d="M1181 579 H1189" stroke="#000" stroke-width="0.5"/><path d="M1181 582 v30" stroke="#20c0c0" stroke-width="1"/><rect x="1193" y="579" width="10" height="23" fill="url(#or)"/><path d="M1193 579 V602 M1203 579 V602" stroke="#000" stroke-width="0.3"/><path d="M1193 602 H1203" stroke="#000" stroke-width="0.5"/><path d="M1193 579 H1203" stroke="#000" stroke-width="0.5"/><rect x="1188" y="600" width="17" height="6" fill="#a8a8a0" stroke="#333" stroke-width=".5"/><rect x="1209" y="576" width="12" height="36" fill="url(#dg)"/><path d="M1209 576 V612 M1221 576 V612" stroke="#000" stroke-width="0.36"/><path d="M1209 612 H1221" stroke="#000" stroke-width="0.6"/><path d="M1209 576 H1221" stroke="#000" stroke-width="0.6"/><rect x="1220" y="576" width="13" height="36" fill="url(#dg)"/><path d="M1220 576 V612 M1233 576 V612" stroke="#000" stroke-width="0.36"/><path d="M1220 612 H1233" stroke="#000" stroke-width="0.6"/><path d="M1220 576 H1233" stroke="#000" stroke-width="0.6"/><rect x="1235" y="576" width="52" height="6" fill="#00a0a0" stroke="#333" stroke-width=".5"/><rect x="1239" y="582" width="13" height="27" fill="url(#dg)"/><path d="M1239 582 V609 M1252 582 V609" stroke="#000" stroke-width="0.3"/><path d="M1239 609 H1252" stroke="#000" stroke-width="0.5"/><path d="M1239 582 H1252" stroke="#000" stroke-width="0.5"/><rect x="1244" y="582" width="9" height="20" fill="url(#or)"/><path d="M1244 582 V602 M1253 582 V602" stroke="#000" stroke-width="0.3"/><path d="M1244 602 H1253" stroke="#000" stroke-width="0.5"/><path d="M1244 582 H1253" stroke="#000" stroke-width="0.5"/><rect x="1250" y="582" width="8" height="24" fill="url(#bl)"/><path d="M1250 582 V606 M1258 582 V606" stroke="#000" stroke-width="0.24"/><path d="M1250 606 H1258" stroke="#000" stroke-width="0.4"/><path d="M1250 582 H1258" stroke="#000" stroke-width="0.4"/><rect x="1255" y="582" width="8" height="30" fill="url(#pu)"/><path d="M1255 582 V612 M1263 582 V612" stroke="#000" stroke-width="0.3"/><path d="M1255 612 H1263" stroke="#000" stroke-width="0.5"/><path d="M1255 582 H1263" stroke="#000" stroke-width="0.5"/><rect x="1273" y="582" width="9" height="22" fill="url(#or)"/><path d="M1273 582 V604 M1282 582 V604" stroke="#000" stroke-width="0.3"/><path d="M1273 604 H1282" stroke="#000" stroke-width="0.5"/><path d="M1273 582 H1282" stroke="#000" stroke-width="0.5"/><rect x="1290" y="575" width="15" height="34" fill="url(#te)"/><path d="M1290 575 V609 M1305 575 V609" stroke="#000" stroke-width="0.36"/><path d="M1290 609 H1305" stroke="#000" stroke-width="0.6"/><path d="M1290 575 H1305" stroke="#000" stroke-width="0.6"/><rect x="1303" y="575" width="24" height="35" fill="url(#te)"/><path d="M1303 575 V610 M1327 575 V610" stroke="#000" stroke-width="0.48"/><path d="M1303 610 H1327" stroke="#000" stroke-width="0.8"/><path d="M1303 575 H1327" stroke="#000" stroke-width="0.8"/><rect x="1335" y="572" width="12" height="7" fill="url(#gy)"/><path d="M1335 572 V579 M1347 572 V579" stroke="#000" stroke-width="0.6"/><path d="M1335 579 H1347" stroke="#000" stroke-width="1"/><path d="M1335 572 H1347" stroke="#000" stroke-width="1"/><polygon points="1347,573 1365,573 1365,612 1347,606" fill="#bca8a6" stroke="#000" stroke-width="0.6" stroke-linejoin="round"/><polygon points="1027,615.5 1366,611 1366,657 1052,659 1052,670 1027,670" fill="#9e9a00" stroke="#000" stroke-width="1" stroke-linejoin="round"/><polygon points="1012,608 1027,615.5 1027,670 1012,658" fill="#9a9600" stroke="#000" stroke-width="1" stroke-linejoin="round"/><polygon points="1027,670 1052,670 1052,659 1366,657 1366,729 1027,733" fill="#009999" stroke="#000" stroke-width="1" stroke-linejoin="round"/><polygon points="1012,658 1027,670 1027,733 1012,730" fill="#009494" stroke="#000" stroke-width="1" stroke-linejoin="round"/><polygon points="1052,659 1366,657" fill="none" stroke="#000" stroke-width="1" stroke-linejoin="round"/><path d="M1024 634 v10 M1024 690 v12" stroke="#000" stroke-width="1.6"/><rect x="1059" y="621" width="23" height="7" fill="url(#la)"/><path d="M1059 621 V628 M1082 621 V628" stroke="#000" stroke-width="0.6"/><path d="M1059 628 H1082" stroke="#000" stroke-width="1"/><path d="M1059 621 H1082" stroke="#000" stroke-width="1"/><rect x="1058" y="628" width="25" height="37" fill="url(#la)"/><path d="M1058 628 V665 M1083 628 V665" stroke="#000" stroke-width="0.6"/><path d="M1058 665 H1083" stroke="#000" stroke-width="1"/><path d="M1058 628 H1083" stroke="#000" stroke-width="1"/><rect x="1065" y="665" width="13" height="29" fill="url(#la)"/><path d="M1065 665 V694 M1078 665 V694" stroke="#000" stroke-width="0.6"/><path d="M1065 694 H1078" stroke="#000" stroke-width="1"/><path d="M1065 665 H1078" stroke="#000" stroke-width="1"/><rect x="1326" y="617" width="23" height="7" fill="url(#la)"/><path d="M1326 617 V624 M1349 617 V624" stroke="#000" stroke-width="0.6"/><path d="M1326 624 H1349" stroke="#000" stroke-width="1"/><path d="M1326 617 H1349" stroke="#000" stroke-width="1"/><rect x="1325" y="624" width="25" height="37" fill="url(#la)"/><path d="M1325 624 V661 M1350 624 V661" stroke="#000" stroke-width="0.6"/><path d="M1325 661 H1350" stroke="#000" stroke-width="1"/><path d="M1325 624 H1350" stroke="#000" stroke-width="1"/><rect x="1330" y="661" width="13" height="29" fill="url(#la)"/><path d="M1330 661 V690 M1343 661 V690" stroke="#000" stroke-width="0.6"/><path d="M1330 690 H1343" stroke="#000" stroke-width="1"/><path d="M1330 661 H1343" stroke="#000" stroke-width="1"/><rect x="1005" y="800" width="21" height="48" fill="url(#ol)"/><path d="M1005 800 V848 M1026 800 V848" stroke="#000" stroke-width="0.36"/><path d="M1005 848 H1026" stroke="#000" stroke-width="0.6"/><path d="M1005 800 H1026" stroke="#000" stroke-width="0.6"/><rect x="1025" y="733" width="12" height="18" fill="url(#gy)"/><path d="M1025 733 V751 M1037 733 V751" stroke="#000" stroke-width="0.6"/><path d="M1025 751 H1037" stroke="#000" stroke-width="1"/><rect x="1058" y="734" width="6" height="47" fill="url(#lg)"/><path d="M1058 734 V781 M1064 734 V781" stroke="#000" stroke-width="0.24"/><path d="M1058 781 H1064" stroke="#000" stroke-width="0.4"/><path d="M1058 734 H1064" stroke="#000" stroke-width="0.4"/><rect x="1047" y="734" width="13" height="47" fill="url(#gy)"/><path d="M1047 734 V781 M1060 734 V781" stroke="#000" stroke-width="0.6"/><path d="M1047 781 H1060" stroke="#000" stroke-width="1"/><rect x="1046" y="781" width="19" height="12" fill="url(#gy)"/><path d="M1046 781 V793 M1065 781 V793" stroke="#000" stroke-width="0.6"/><path d="M1046 793 H1065" stroke="#000" stroke-width="1"/><path d="M1046 781 H1065" stroke="#000" stroke-width="1"/><rect x="1048" y="793" width="7" height="58" fill="url(#lg)"/><path d="M1048 793 V851 M1055 793 V851" stroke="#000" stroke-width="0.3"/><path d="M1048 851 H1055" stroke="#000" stroke-width="0.5"/><path d="M1048 793 H1055" stroke="#000" stroke-width="0.5"/><rect x="1054" y="793" width="6" height="59" fill="url(#lg)"/><path d="M1054 793 V852 M1060 793 V852" stroke="#000" stroke-width="0.3"/><path d="M1054 852 H1060" stroke="#000" stroke-width="0.5"/><path d="M1054 793 H1060" stroke="#000" stroke-width="0.5"/><rect x="1059" y="793" width="7" height="60" fill="url(#lg)"/><path d="M1059 793 V853 M1066 793 V853" stroke="#000" stroke-width="0.3"/><path d="M1059 853 H1066" stroke="#000" stroke-width="0.5"/><path d="M1059 793 H1066" stroke="#000" stroke-width="0.5"/><path d="M1048 793 l2 12 l3 -6 l3 6 l3 -6 l3 6 l3 -6 M1048 796 v8" stroke="#111" stroke-width=".7" fill="none"/><rect x="1065" y="734" width="5" height="117" fill="url(#ye)"/><path d="M1065 734 V851 M1070 734 V851" stroke="#000" stroke-width="0.3"/><path d="M1065 851 H1070" stroke="#000" stroke-width="0.5"/><path d="M1065 734 H1070" stroke="#000" stroke-width="0.5"/><rect x="1126" y="733" width="22" height="3" fill="#8a8a84" stroke="#444" stroke-width=".6"/><circle cx="1128" cy="743" r="9" fill="#8a8a84" stroke="#444" stroke-width=".8"/><circle cx="1130" cy="743" r="6.5" fill="none" stroke="#444" stroke-width=".8"/><path d="M1138 738 a5 5 0 1 0 0 9" fill="#9a9a94" stroke="#333" stroke-width=".8"/><circle cx="1139.5" cy="744" r="3.8" fill="#b8b8b0" stroke="#333" stroke-width=".6"/><circle cx="1139" cy="743" r="1.4" fill="#e8e8e0"/><rect x="1149" y="736" width="22" height="47" fill="url(#sa)"/><path d="M1149 736 V783 M1171 736 V783" stroke="#000" stroke-width="0.6"/><path d="M1149 783 H1171" stroke="#000" stroke-width="1"/><path d="M1149 736 H1171" stroke="#000" stroke-width="1"/><polygon points="1175,732 1207,732 1182,835 1150,835" fill="#6e6a38" stroke="#000" stroke-width="1" stroke-linejoin="round"/><path d="M1185 732 L1160 835" stroke="#000" stroke-width=".8"/><polygon points="1140,832 1155,836 1196,834 1196,851 1155,851 1140,846" fill="#7a7e78" stroke="#000" stroke-width="1" stroke-linejoin="round"/><path d="M1155 836 V851" stroke="#000" stroke-width=".8"/><path d="M1142.5 836 h3 v9 h-3z M1148 837 h3 v9.5 h-3z" fill="none" stroke="#222" stroke-width=".7"/><rect x="1319" y="734" width="9" height="47" fill="url(#sa)"/><path d="M1319 734 V781 M1328 734 V781" stroke="#000" stroke-width="0.6"/><path d="M1319 781 H1328" stroke="#000" stroke-width="1"/><rect x="1305" y="729" width="11" height="41" fill="url(#gy)"/><path d="M1305 729 V770 M1316 729 V770" stroke="#000" stroke-width="0.6"/><path d="M1305 770 H1316" stroke="#000" stroke-width="1"/><rect x="1302" y="769" width="18" height="12" fill="url(#gy)"/><path d="M1302 769 V781 M1320 769 V781" stroke="#000" stroke-width="0.6"/><path d="M1302 781 H1320" stroke="#000" stroke-width="1"/><path d="M1302 769 H1320" stroke="#000" stroke-width="1"/><rect x="1328" y="729" width="12" height="48" fill="url(#gy)"/><path d="M1328 729 V777 M1340 729 V777" stroke="#000" stroke-width="0.6"/><path d="M1328 777 H1340" stroke="#000" stroke-width="1"/><rect x="1325" y="776" width="19" height="12" fill="url(#gy)"/><path d="M1325 776 V788 M1344 776 V788" stroke="#000" stroke-width="0.6"/><path d="M1325 788 H1344" stroke="#000" stroke-width="1"/><path d="M1325 776 H1344" stroke="#000" stroke-width="1"/><rect x="1319" y="786" width="46" height="61" fill="url(#ol)"/><path d="M1319 786 V847 M1365 786 V847" stroke="#000" stroke-width="0.48"/><path d="M1319 847 H1365" stroke="#000" stroke-width="0.8"/><path d="M1319 786 H1365" stroke="#000" stroke-width="0.8"/><polygon points="909,849 943,858 943,880 909,871" fill="#00c6c6" stroke="#000" stroke-width="1" stroke-linejoin="round"/><polygon points="943,858 1459,850 1459,872 943,880" fill="#00cccc" stroke="#000" stroke-width="1" stroke-linejoin="round"/><polygon points="909,871 943,880 943,908 909,901" fill="#c46cc8" stroke="#000" stroke-width="1" stroke-linejoin="round"/><polygon points="943,880 1459,872 1459,901 943,909" fill="#cc70cc" stroke="#000" stroke-width="1" stroke-linejoin="round"/><polygon points="896,904 909,900 943,907 1459,901 1436,902 1476,913 960,922 892,904" fill="#b0b0b0" stroke="#000" stroke-width="0" stroke-linejoin="round"/><polygon points="909,901 943,908 943,911 909,907" fill="#d4d4d4" stroke="#000" stroke-width="0.6" stroke-linejoin="round"/><path d="M892 904 L960 922 L1476 913" stroke="#000" fill="none"/><polygon points="892,904 960,922 960,959 892,941" fill="#c9c9c9" stroke="#000" stroke-width="1" stroke-linejoin="round"/><polygon points="960,922 1476,913 1476,950 960,959" fill="#cccccc" stroke="#000" stroke-width="1" stroke-linejoin="round"/><ellipse cx="977" cy="913" rx="12" ry="3.5" fill="#e87878" stroke="#333" stroke-width=".6"/><rect x="965" y="909" width="24" height="5" fill="#f08080"/><rect x="1405" y="902" width="23" height="6" fill="#f08080" stroke="#333" stroke-width=".6"/><path d="M960 908 H1040 M1150 907 H1215 M1280 905 H1340" stroke="#555" stroke-width=".8"/><rect x="1118" y="884" width="15" height="32" fill="url(#yp)"/><path d="M1118 884 V916 M1133 884 V916" stroke="#000" stroke-width="0.6"/><path d="M1118 916 H1133" stroke="#000" stroke-width="1"/><path d="M1118 884 H1133" stroke="#000" stroke-width="1"/><rect x="1280" y="881" width="15" height="32" fill="url(#yp)"/><path d="M1280 881 V913 M1295 881 V913" stroke="#000" stroke-width="0.6"/><path d="M1280 913 H1295" stroke="#000" stroke-width="1"/><path d="M1280 881 H1295" stroke="#000" stroke-width="1"/><rect x="1390" y="501" width="58" height="10" fill="url(#pg)"/><path d="M1390 501 V511 M1448 501 V511" stroke="#000" stroke-width="0.6"/><path d="M1390 511 H1448" stroke="#000" stroke-width="1"/><path d="M1390 501 H1448" stroke="#000" stroke-width="1"/><rect x="1393" y="511" width="53" height="145" fill="url(#pg)"/><path d="M1393 511 V656 M1446 511 V656" stroke="#000" stroke-width="0.6"/><path d="M1393 656 H1446" stroke="#000" stroke-width="1"/><path d="M1393 511 H1446" stroke="#000" stroke-width="1"/><rect x="1395" y="656" width="52" height="124" fill="url(#gr)"/><path d="M1395 656 V780 M1447 656 V780" stroke="#000" stroke-width="0.6"/><path d="M1395 780 H1447" stroke="#000" stroke-width="1"/><path d="M1395 656 H1447" stroke="#000" stroke-width="1"/><rect x="1393" y="780" width="58" height="12" fill="url(#gr)"/><path d="M1393 780 V792 M1451 780 V792" stroke="#000" stroke-width="0.6"/><path d="M1393 792 H1451" stroke="#000" stroke-width="1"/><path d="M1393 780 H1451" stroke="#000" stroke-width="1"/><rect x="1403" y="792" width="38" height="95" fill="url(#bu)"/><path d="M1403 792 V887 M1441 792 V887" stroke="#000" stroke-width="0.6"/><path d="M1403 887 H1441" stroke="#000" stroke-width="1"/><path d="M1403 792 H1441" stroke="#000" stroke-width="1"/><path d="M1403 804 H1441 M1403 843 H1441" stroke="#222" stroke-width=".8"/><path d="M1404 805.5 H1440 M1404 844.5 H1440" stroke="#b0b0c8" stroke-width=".8"/><rect x="956" y="506" width="56" height="158" fill="url(#pg)"/><path d="M956 506 V664 M1012 506 V664" stroke="#000" stroke-width="0.6"/><path d="M956 664 H1012" stroke="#000" stroke-width="1"/><path d="M956 506 H1012" stroke="#000" stroke-width="1"/><rect x="960" y="664" width="53" height="124" fill="url(#gr)"/><path d="M960 664 V788 M1013 664 V788" stroke="#000" stroke-width="0.6"/><path d="M960 788 H1013" stroke="#000" stroke-width="1"/><path d="M960 664 H1013" stroke="#000" stroke-width="1"/><rect x="959" y="787" width="58" height="12" fill="url(#gr)"/><path d="M959 787 V799 M1017 787 V799" stroke="#000" stroke-width="0.6"/><path d="M959 799 H1017" stroke="#000" stroke-width="1"/><path d="M959 787 H1017" stroke="#000" stroke-width="1"/><rect x="970" y="799" width="38" height="95" fill="url(#bu)"/><path d="M970 799 V894 M1008 799 V894" stroke="#000" stroke-width="0.6"/><path d="M970 894 H1008" stroke="#000" stroke-width="1"/><path d="M970 799 H1008" stroke="#000" stroke-width="1"/><path d="M970 811 H1008 M970 849 H1008" stroke="#222" stroke-width=".8"/><path d="M971 812.5 H1007 M971 850.5 H1007" stroke="#b0b0c8" stroke-width=".8"/><rect x="1025" y="751" width="22" height="165" fill="url(#sa)"/><path d="M1025 751 V916 M1047 751 V916" stroke="#000" stroke-width="0.6"/><path d="M1025 916 H1047" stroke="#000" stroke-width="1"/><path d="M1025 751 H1047" stroke="#000" stroke-width="1"/><rect x="1195" y="748" width="22" height="166" fill="url(#sa)"/><path d="M1195 748 V914 M1217 748 V914" stroke="#000" stroke-width="0.6"/><path d="M1195 914 H1217" stroke="#000" stroke-width="1"/><path d="M1195 748 H1217" stroke="#000" stroke-width="1"/><rect x="1365" y="747" width="21" height="165" fill="url(#sa)"/><path d="M1365 747 V912 M1386 747 V912" stroke="#000" stroke-width="0.6"/><path d="M1365 912 H1386" stroke="#000" stroke-width="1"/><path d="M1365 747 H1386" stroke="#000" stroke-width="1"/><polygon points="893,457 949,471 949,508 894,494" fill="#c16ec6" stroke="#000" stroke-width="1" stroke-linejoin="round"/><polygon points="949,471 1466,463 1466,499 949,508" fill="#cb72d2" stroke="#000" stroke-width="1" stroke-linejoin="round"/><polygon points="887,403 954,421 955,472 887,451" fill="#cbcbcb" stroke="#000" stroke-width="1" stroke-linejoin="round"/><polygon points="954,421 1471,411 1471,464 955,472" fill="#cfcfcf" stroke="#000" stroke-width="1" stroke-linejoin="round"/><polygon points="887,403 1403,394 1471,412 954,421" fill="#ababab" stroke="#000" stroke-width="1" stroke-linejoin="round"/><path d="M917 405 H963" stroke="#000" stroke-width="2" stroke-linecap="round"/><path d="M960 409 H988" stroke="#000" stroke-width="2" stroke-linecap="round"/><path d="M971 412 H1000" stroke="#000" stroke-width="2" stroke-linecap="round"/><path d="M961 416.5 H1007" stroke="#000" stroke-width="2" stroke-linecap="round"/><path d="M1056 409 H1071" stroke="#000" stroke-width="2" stroke-linecap="round"/><path d="M1250 407 H1265" stroke="#000" stroke-width="2" stroke-linecap="round"/><path d="M1348 397 H1394" stroke="#000" stroke-width="2" stroke-linecap="round"/><path d="M1358 402 H1387" stroke="#000" stroke-width="2" stroke-linecap="round"/><path d="M1369 405 H1398" stroke="#000" stroke-width="2" stroke-linecap="round"/><path d="M1395 409 H1440" stroke="#000" stroke-width="2" stroke-linecap="round"/><path d="M937 405 H952" stroke="#707088" stroke-width=".8"/><path d="M973 416.5 H1002" stroke="#707088" stroke-width=".8"/><path d="M1398 409 H1428" stroke="#707088" stroke-width=".8"/><ellipse cx="1179" cy="407" rx="39" ry="2" fill="#fff" stroke="#000" stroke-width="1"/><path d="M1178 405.5 v3 M1190 405.5 v3" stroke="#333" stroke-width=".8"/></svg>
<svg style="left:0;top:0" width="1100" height="560">
<defs><linearGradient id="wm" x1="0" y1="0" x2="0" y2="1"><stop offset="0" stop-color="#f07020"/><stop offset=".6" stop-color="#f08a20"/><stop offset="1" stop-color="#f0a020"/></linearGradient>
<linearGradient id="wm2" x1="0" y1="0" x2="1" y2="1"><stop offset="0" stop-color="#f0b020"/><stop offset="1" stop-color="#f07020"/></linearGradient></defs>
<g fill="none" stroke="url(#wm)" stroke-width="2.6" stroke-linecap="butt">
<path d="M892.5 517 V537 q6 2 13 1.5"/>
<path d="M897.5 512 V534 q5 2.5 10 3"/>
<path d="M902 508 V531 q4 3 7 5"/>
<path d="M926.5 508 V531 q-4 3 -7 5"/>
<path d="M931 512 V534 q-5 2.5 -10 3"/>
<path d="M935.5 517 V537 q-6 2 -13 1.5"/>
</g>
<path d="M891 538.5 H937 V540.5 H891Z" fill="#f0a020"/>
<path d="M919 510 q-15 1 -14 14 q1 7 6 11 q-4 -6 -3 -12 q1 -8 11 -13z" fill="url(#wm2)"/>
<path d="M917 520 q6 5 3 12 q-2 4 -7 5 q4 -3 5 -8 q1 -5 -1 -9z" fill="url(#wm2)"/>
<text x="947" y="529.5" font-size="18.5" font-weight="bold" fill="#f08a28" font-family="Liberation Sans" textLength="82" lengthAdjust="spacingAndGlyphs">智造资料网</text>
<text x="947" y="538" font-size="5" font-weight="bold" fill="#f08a28" font-family="Liberation Sans" textLength="82" lengthAdjust="spacingAndGlyphs">INTELLIGENT MANUFACTURING DATA</text>
</svg>
<svg style="left:0;top:0" width="1920" height="1048">
<circle cx="1367" cy="1005" r="8.5" fill="#9a6a58"/><text x="1367" y="1010" font-size="13" font-weight="bold" fill="#fff" text-anchor="middle" font-family="Liberation Sans">C</text>
<circle cx="1374.5" cy="1026.5" r="8.5" fill="#9a6a58"/><path d="M1369 1022 l3 -1.5 h5 l3 1.5 l1.5 3 h-2 v5.5 h-9 v-5.5 h-2z" fill="#fff"/>
<ellipse cx="1406.5" cy="1038" rx="14" ry="2.8" fill="#b87850" opacity=".85"/>
<path d="M1392 1017 q-6 2 -6 8 q1 3 4 2 l2 -3 v6 q-1 5 3 7 h4 l1 -2.5 h4 l1 2.5 h4 q4 -2 3 -7 v-6 l2 3 q3 1 4 -2 q0 -6 -6 -8 z" fill="#fcec50" stroke="#c88a30" stroke-width=".7"/>
<path d="M1420 1018 l-14 10" stroke="#a06a38" stroke-width="1.6"/>
<circle cx="1396.5" cy="1029.5" r="6" fill="#c08a50" stroke="#8a5a30" stroke-width=".6"/><circle cx="1392" cy="1024" r="2.4" fill="#c08a50"/><circle cx="1401.5" cy="1024" r="2.4" fill="#c08a50"/>
<circle cx="1393.5" cy="1030" r="1.1" fill="#f070a0"/><circle cx="1399.5" cy="1030" r="1.1" fill="#f070a0"/><path d="M1394 1027.5 h1 M1398.5 1027.5 h1" stroke="#4a2818" stroke-width=".9"/>
<path d="M1398 975 q-3 -3 -4 -7 M1408 975 q0 -5 1 -7" stroke="#8a5a30" stroke-width="2" fill="none"/><circle cx="1399" cy="966.5" r="2.6" fill="#8a5a30"/><circle cx="1409" cy="968" r="1.6" fill="#8a5a30"/>
<circle cx="1391" cy="977.5" r="6" fill="#c08448" stroke="#9a6030" stroke-width=".8"/><circle cx="1423" cy="977.5" r="6" fill="#c08448" stroke="#9a6030" stroke-width=".8"/>
<circle cx="1390" cy="978" r="2.5" fill="#f0b090"/><circle cx="1423" cy="978" r="2.5" fill="#f0b090"/>
<ellipse cx="1406" cy="996" rx="26" ry="22.5" fill="#c48848" stroke="#9a6030" stroke-width=".9"/>
<ellipse cx="1406.5" cy="1001" rx="20" ry="16.5" fill="#fcee50" stroke="#b07a30" stroke-width=".7"/>
<circle cx="1395.5" cy="994" r="1.7" fill="#4a2818"/><circle cx="1416.5" cy="993.5" r="1.7" fill="#4a2818"/><path d="M1405 997.5 h2.5" stroke="#4a2818" stroke-width="1.2"/>
<ellipse cx="1391.5" cy="1000" rx="3.5" ry="2.6" fill="#f89a40" opacity=".8"/><ellipse cx="1421" cy="1000" rx="3.5" ry="2.6" fill="#f89a40" opacity=".8"/>
<g font-family="Liberation Sans" font-weight="bold" text-anchor="middle" stroke-linejoin="round" paint-order="stroke fill">
<text x="1446" y="991" font-size="23" fill="#fbf6ee" stroke="#b07840" stroke-width="3" textLength="24" lengthAdjust="spacingAndGlyphs" transform="rotate(-5 1446 981)">W</text>
<circle cx="1439" cy="980" r="1.6" fill="#d8a070"/><circle cx="1452" cy="978" r="1.6" fill="#d8a070"/><circle cx="1446" cy="987" r="1.6" fill="#d8a070"/>
<circle cx="1445.5" cy="1002" r="9.5" fill="#c89060" stroke="#9a6030" stroke-width=".8"/><circle cx="1439" cy="993.5" r="3.3" fill="#c89060" stroke="#9a6030" stroke-width=".6"/><circle cx="1453" cy="993.5" r="3.3" fill="#c89060" stroke="#9a6030" stroke-width=".6"/><ellipse cx="1445.5" cy="1002" rx="3" ry="3.8" fill="#fbf6ee"/>
<text x="1447" y="1031" font-size="24" fill="#fcee50" stroke="#b07840" stroke-width="3" textLength="24" lengthAdjust="spacingAndGlyphs" transform="rotate(-8 1447 1022)">W</text>
</g>
</svg>
</body></html>
